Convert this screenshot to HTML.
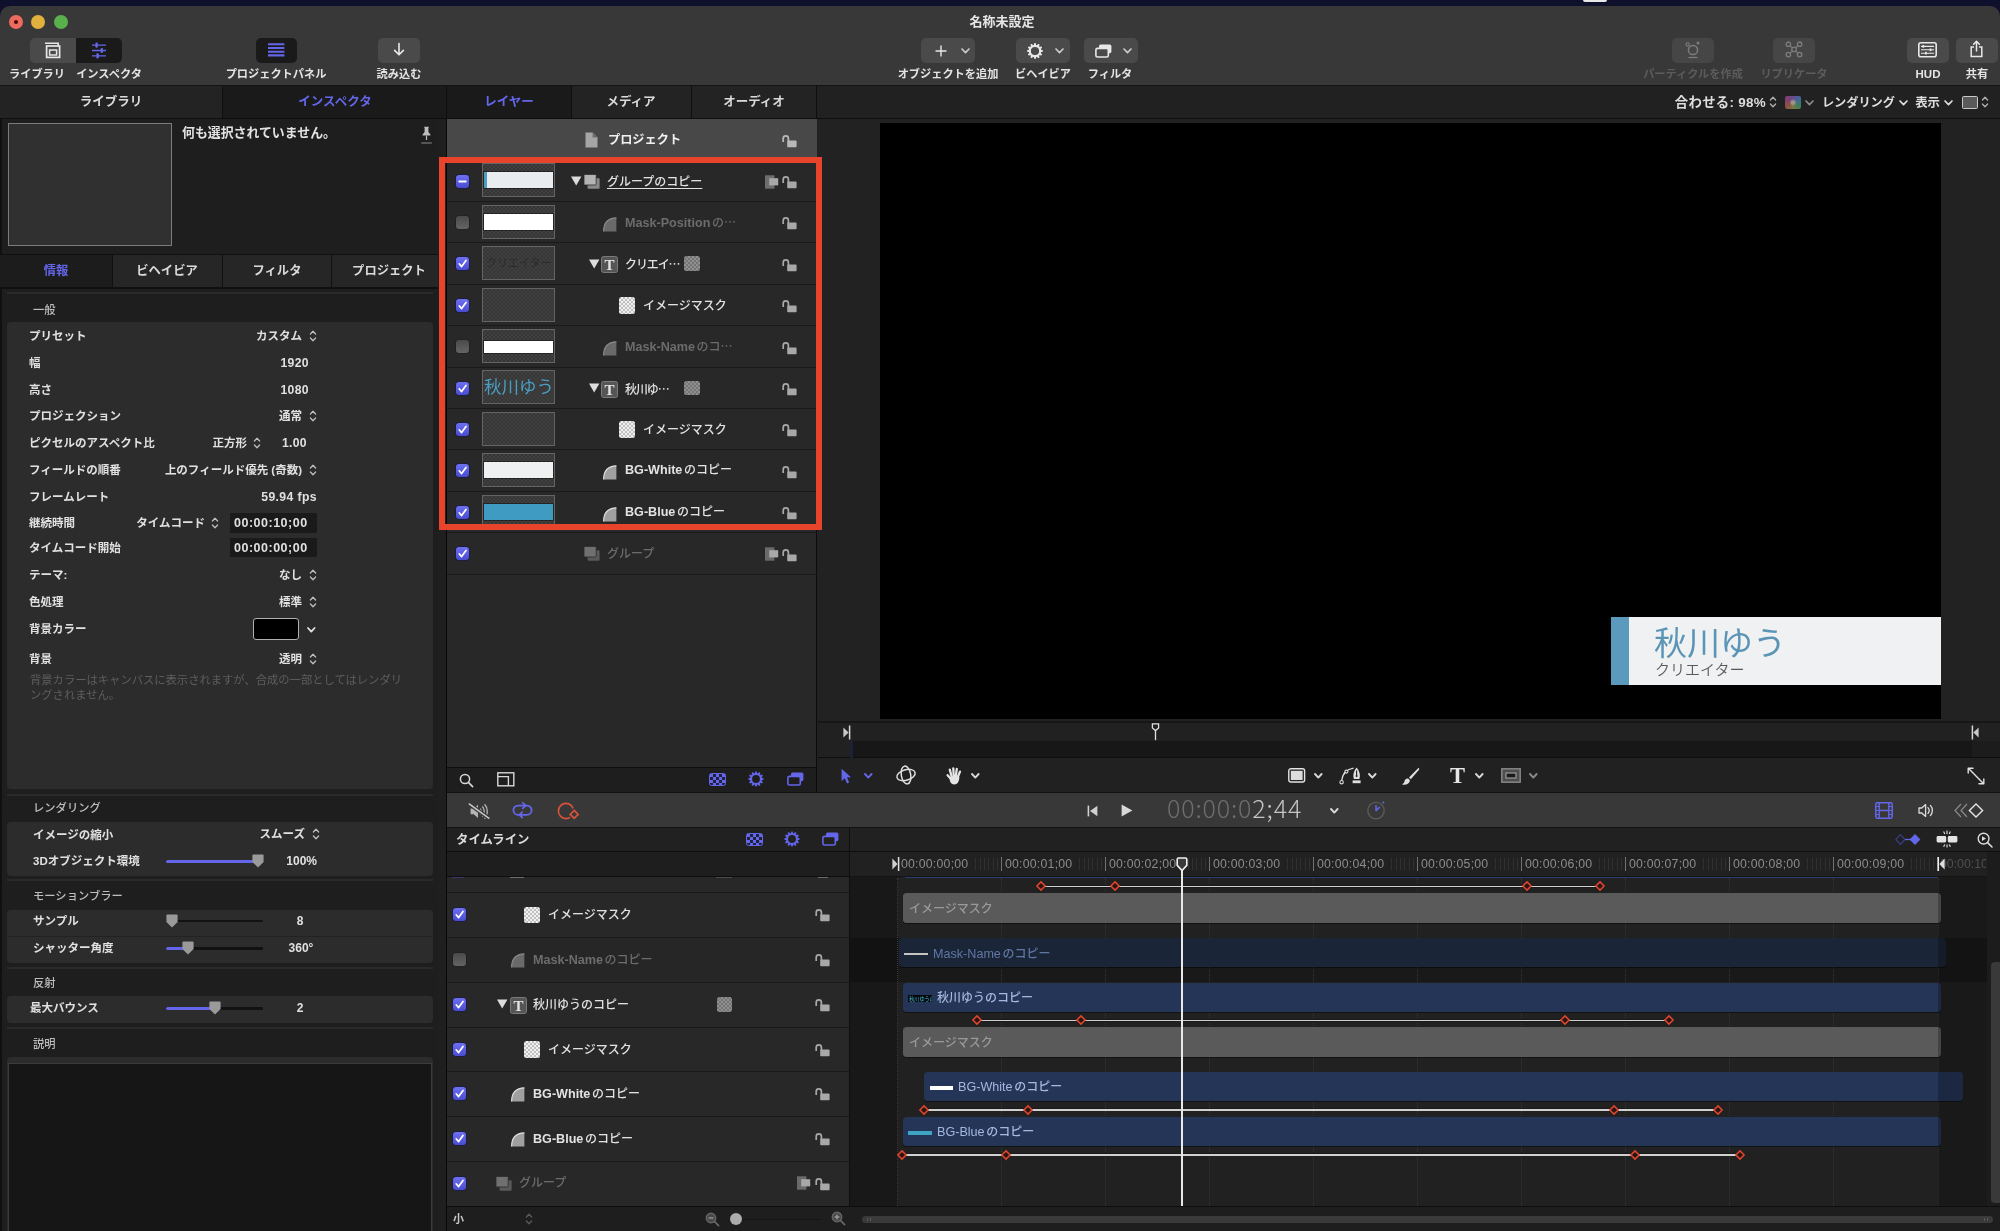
<!DOCTYPE html>
<html lang="ja"><head><meta charset="utf-8"><title>名称未設定</title>
<style>
*{box-sizing:border-box;margin:0;padding:0}
html,body{width:2000px;height:1231px;overflow:hidden;background:#212121}
body{position:relative;font-family:"Liberation Sans","Noto Sans CJK JP",sans-serif;-webkit-font-smoothing:antialiased}
div,svg{position:absolute}
.t{overflow:visible;will-change:transform}
.e{font-family:"Noto Sans CJK JP",sans-serif}
.l{font-size:12.6px;margin-right:1.6px}
svg{overflow:visible}
</style></head>
<body>
<div style="left:0px;top:0px;width:2000px;height:20px;background:#0f112c;"></div>
<div style="left:1583px;top:0px;width:24px;height:2px;background:#e8e8e8;border-radius:0 0 2px 2px;"></div>
<div style="left:0px;top:6px;width:2000px;height:80px;background:#383838;border-radius:10px 10px 0 0;"></div>
<div style="left:0px;top:85px;width:2000px;height:1px;background:#141414;"></div>
<div style="left:8.5px;top:15px;width:14px;height:14px;background:#ec6a5e;border-radius:50%;"></div>
<div style="left:13.5px;top:20px;width:4px;height:4px;background:#4a0b08;border-radius:50%;"></div>
<div style="left:31px;top:15px;width:14px;height:14px;background:#e0b13c;border-radius:50%;"></div>
<div style="left:53.5px;top:15px;width:14px;height:14px;background:#58b14a;border-radius:50%;"></div>
<div class="t" style="top:11.5px;height:20px;line-height:20px;font-size:13px;color:#e6e6e6;font-weight:700;white-space:nowrap;left:751.5px;width:500px;text-align:center;">名称未設定</div>
<div style="left:30px;top:38px;width:46px;height:25px;background:#4a4a4a;border-radius:5px 0 0 5px;"></div>
<div style="left:76px;top:38px;width:46px;height:25px;background:#1a1a1a;border-radius:0 5px 5px 0;"></div>
<svg style="left:44.2px;top:42px;" width="17" height="17" viewBox="0 0 17 17"><path d="M1 1.2H14.2V3.6" fill="none" stroke="#e8e8e8" stroke-width="1.6"/><rect x="2.6" y="4" width="13" height="11.4" fill="none" stroke="#e8e8e8" stroke-width="1.7"/><rect x="5.6" y="8" width="7" height="5" fill="none" stroke="#e8e8e8" stroke-width="1.5"/></svg>
<svg style="left:92px;top:42px;" width="15" height="17" viewBox="0 0 15 17"><g stroke="#6466ea" stroke-width="1.3"><path d="M0 3.2H14M0 8.5H14M0 13.8H14"/></g><g fill="#6466ea"><rect x="3.4" y="0.6" width="2.4" height="5.2" rx="1"/><rect x="8.6" y="5.9" width="2.4" height="5.2" rx="1"/><rect x="4.4" y="11.2" width="2.4" height="5.2" rx="1"/></g></svg>
<div class="t" style="top:64.3px;height:20px;line-height:20px;font-size:11.2px;color:#e4e4e4;font-weight:700;white-space:nowrap;left:-213px;width:500px;text-align:center;">ライブラリ</div>
<div class="t" style="top:64.3px;height:20px;line-height:20px;font-size:11.2px;color:#e4e4e4;font-weight:700;white-space:nowrap;left:-141.5px;width:500px;text-align:center;">インスペクタ</div>
<div style="left:256px;top:38px;width:41px;height:25px;background:#1a1a1a;border-radius:5px;"></div>
<svg style="left:268px;top:43.2px;" width="17" height="14" viewBox="0 0 17 14"><path d="M0 1.3H16.4M0 5H16.4M0 8.7H16.4M0 12.4H16.4" stroke="#6466ea" stroke-width="2.1"/></svg>
<div class="t" style="top:64.3px;height:20px;line-height:20px;font-size:11.2px;color:#e4e4e4;font-weight:700;white-space:nowrap;left:26px;width:500px;text-align:center;">プロジェクトパネル</div>
<div style="left:378px;top:38px;width:42px;height:25px;background:#4a4a4a;border-radius:5px;"></div>
<svg style="left:393px;top:43px;" width="12" height="14" viewBox="0 0 12 14"><path d="M6 0.6V11.4M1.6 7.4L6 11.8L10.4 7.4" fill="none" stroke="#e8e8e8" stroke-width="1.6" stroke-linecap="round" stroke-linejoin="round"/></svg>
<div class="t" style="top:64.3px;height:20px;line-height:20px;font-size:11.2px;color:#e4e4e4;font-weight:700;white-space:nowrap;left:148.5px;width:500px;text-align:center;">読み込む</div>
<div style="left:921px;top:38px;width:54px;height:25px;background:#4a4a4a;border-radius:5px;"></div>
<svg style="left:935px;top:44.5px;" width="12" height="12" viewBox="0 0 12 12"><path d="M6 0.5V11.5M0.5 6H11.5" stroke="#e8e8e8" stroke-width="1.4"/></svg>
<svg style="left:960.5px;top:47.5px;" width="9" height="6" viewBox="0 0 9 6"><path d="M1 1L4.5 4.6L8 1" fill="none" stroke="#c8c8c8" stroke-width="1.7" stroke-linecap="round" stroke-linejoin="round"/></svg>
<div class="t" style="top:64.3px;height:20px;line-height:20px;font-size:11.2px;color:#e4e4e4;font-weight:700;white-space:nowrap;left:697.5px;width:500px;text-align:center;">オブジェクトを追加</div>
<div style="left:1016px;top:38px;width:54px;height:25px;background:#4a4a4a;border-radius:5px;"></div>
<svg style="left:1026.3px;top:41.5px;" width="18" height="18" viewBox="0 0 18 18"><g transform="translate(9 9)"><circle r="5.2" fill="none" stroke="#e8e8e8" stroke-width="2.2"/><rect x="-1.0" y="-7.9" width="2.0" height="3" rx="0.8" fill="#e8e8e8" transform="rotate(0.0)"/><rect x="-1.0" y="-7.9" width="2.0" height="3" rx="0.8" fill="#e8e8e8" transform="rotate(30.0)"/><rect x="-1.0" y="-7.9" width="2.0" height="3" rx="0.8" fill="#e8e8e8" transform="rotate(60.0)"/><rect x="-1.0" y="-7.9" width="2.0" height="3" rx="0.8" fill="#e8e8e8" transform="rotate(90.0)"/><rect x="-1.0" y="-7.9" width="2.0" height="3" rx="0.8" fill="#e8e8e8" transform="rotate(120.0)"/><rect x="-1.0" y="-7.9" width="2.0" height="3" rx="0.8" fill="#e8e8e8" transform="rotate(150.0)"/><rect x="-1.0" y="-7.9" width="2.0" height="3" rx="0.8" fill="#e8e8e8" transform="rotate(180.0)"/><rect x="-1.0" y="-7.9" width="2.0" height="3" rx="0.8" fill="#e8e8e8" transform="rotate(210.0)"/><rect x="-1.0" y="-7.9" width="2.0" height="3" rx="0.8" fill="#e8e8e8" transform="rotate(240.0)"/><rect x="-1.0" y="-7.9" width="2.0" height="3" rx="0.8" fill="#e8e8e8" transform="rotate(270.0)"/><rect x="-1.0" y="-7.9" width="2.0" height="3" rx="0.8" fill="#e8e8e8" transform="rotate(300.0)"/><rect x="-1.0" y="-7.9" width="2.0" height="3" rx="0.8" fill="#e8e8e8" transform="rotate(330.0)"/></g></svg>
<svg style="left:1055.3px;top:47.5px;" width="9" height="6" viewBox="0 0 9 6"><path d="M1 1L4.5 4.6L8 1" fill="none" stroke="#c8c8c8" stroke-width="1.7" stroke-linecap="round" stroke-linejoin="round"/></svg>
<div class="t" style="top:64.3px;height:20px;line-height:20px;font-size:11.2px;color:#e4e4e4;font-weight:700;white-space:nowrap;left:792.5px;width:500px;text-align:center;">ビヘイビア</div>
<div style="left:1084px;top:38px;width:54px;height:25px;background:#4a4a4a;border-radius:5px;"></div>
<svg style="left:1094.7px;top:43.5px;" width="17" height="14" viewBox="0 0 17 14"><rect x="4" y="0.6" width="12.4" height="8.6" rx="1.6" fill="#e8e8e8"/><rect x="0.9" y="4.4" width="12.4" height="8.6" rx="1.6" fill="#4a4a4a" stroke="#e8e8e8" stroke-width="1.6"/></svg>
<svg style="left:1122.5px;top:47.5px;" width="9" height="6" viewBox="0 0 9 6"><path d="M1 1L4.5 4.6L8 1" fill="none" stroke="#c8c8c8" stroke-width="1.7" stroke-linecap="round" stroke-linejoin="round"/></svg>
<div class="t" style="top:64.3px;height:20px;line-height:20px;font-size:11.2px;color:#e4e4e4;font-weight:700;white-space:nowrap;left:860.2px;width:500px;text-align:center;">フィルタ</div>
<div style="left:1672px;top:38px;width:42px;height:25px;background:#464646;border-radius:5px;"></div>
<svg style="left:1685px;top:41px;" width="16" height="18" viewBox="0 0 16 18"><circle cx="8" cy="9" r="4.6" fill="none" stroke="#7d7d7d" stroke-width="1.5"/><circle cx="2.6" cy="3.4" r="1.6" fill="none" stroke="#7d7d7d" stroke-width="1.1"/><circle cx="13" cy="2" r="1.5" fill="#7d7d7d"/><path d="M3.5 16.5H12.5" stroke="#7d7d7d" stroke-width="1.3"/></svg>
<div class="t" style="top:64.3px;height:20px;line-height:20px;font-size:11.2px;color:#5c5c5c;font-weight:700;white-space:nowrap;left:1443px;width:500px;text-align:center;">パーティクルを作成</div>
<div style="left:1773px;top:38px;width:42px;height:25px;background:#464646;border-radius:5px;"></div>
<svg style="left:1785px;top:41px;" width="18" height="17" viewBox="0 0 18 17"><path d="M5 4.7L7.4 6.9M13 4.7L10.6 6.9M5 12.1L7.4 9.9M13 12.1L10.6 9.9" stroke="#7d7d7d" stroke-width="1.2"/><g fill="none" stroke="#7d7d7d" stroke-width="1.3"><circle cx="3.4" cy="3.2" r="2.2"/><circle cx="14.6" cy="3.2" r="2.2"/><circle cx="9" cy="8.4" r="2.2"/><circle cx="3.4" cy="13.6" r="2.2"/><circle cx="14.6" cy="13.6" r="2.2"/></g></svg>
<div class="t" style="top:64.3px;height:20px;line-height:20px;font-size:11.2px;color:#5c5c5c;font-weight:700;white-space:nowrap;left:1544px;width:500px;text-align:center;">リプリケータ</div>
<div style="left:1906.5px;top:38px;width:42px;height:25px;background:#4a4a4a;border-radius:5px;"></div>
<svg style="left:1918px;top:42px;" width="19" height="15.6" viewBox="0 0 19 15.6"><rect x="0.8" y="0.8" width="17.4" height="14" rx="2" fill="none" stroke="#e8e8e8" stroke-width="1.6"/><path d="M3 4.4H16M3 7.8H16M3 11.2H16" stroke="#e8e8e8" stroke-width="1.1"/><rect x="4.4" y="3.1" width="1.8" height="2.6" fill="#e8e8e8"/><rect x="11.6" y="6.5" width="1.8" height="2.6" fill="#e8e8e8"/><rect x="7" y="9.9" width="1.8" height="2.6" fill="#e8e8e8"/></svg>
<div class="t" style="top:64.0px;height:20px;line-height:20px;font-size:11.5px;color:#e4e4e4;font-weight:700;white-space:nowrap;left:1677.5px;width:500px;text-align:center;">HUD</div>
<div style="left:1955.5px;top:38px;width:42px;height:25px;background:#4a4a4a;border-radius:5px;"></div>
<svg style="left:1970px;top:39.6px;" width="13" height="18" viewBox="0 0 13 18"><path d="M4 7H1.2V16.6H11.8V7H9" fill="none" stroke="#e8e8e8" stroke-width="1.5"/><path d="M6.5 11V1.6M3.6 4.2L6.5 1.2L9.4 4.2" fill="none" stroke="#e8e8e8" stroke-width="1.5" stroke-linecap="round" stroke-linejoin="round"/></svg>
<div class="t" style="top:64.3px;height:20px;line-height:20px;font-size:11.2px;color:#e4e4e4;font-weight:700;white-space:nowrap;left:1726.5px;width:500px;text-align:center;">共有</div>
<div style="left:0px;top:86px;width:2000px;height:33px;background:#212121;"></div>
<div style="left:0px;top:86px;width:222px;height:33px;background:#232323;"></div>
<div style="left:222px;top:86px;width:225px;height:33px;background:#1a1a1a;"></div>
<div style="left:447px;top:86px;width:124px;height:33px;background:#1a1a1a;"></div>
<div style="left:571px;top:86px;width:120px;height:33px;background:#232323;"></div>
<div style="left:691px;top:86px;width:125px;height:33px;background:#232323;"></div>
<div style="left:222px;top:86px;width:1px;height:33px;background:#0e0e0e;"></div>
<div style="left:446px;top:86px;width:1px;height:33px;background:#0e0e0e;"></div>
<div style="left:571px;top:86px;width:1px;height:33px;background:#0e0e0e;"></div>
<div style="left:691px;top:86px;width:1px;height:33px;background:#0e0e0e;"></div>
<div style="left:816px;top:86px;width:1px;height:33px;background:#0e0e0e;"></div>
<div style="left:0px;top:118px;width:2000px;height:1px;background:#0e0e0e;"></div>
<div class="t" style="top:91.8px;height:20px;line-height:20px;font-size:12.5px;color:#dadada;font-weight:700;white-space:nowrap;left:-139.5px;width:500px;text-align:center;">ライブラリ</div>
<div class="t" style="top:91.8px;height:20px;line-height:20px;font-size:12.5px;color:#6466ea;font-weight:700;white-space:nowrap;left:84.5px;width:500px;text-align:center;">インスペクタ</div>
<div class="t" style="top:91.8px;height:20px;line-height:20px;font-size:12.5px;color:#6466ea;font-weight:700;white-space:nowrap;left:258.5px;width:500px;text-align:center;">レイヤー</div>
<div class="t" style="top:91.8px;height:20px;line-height:20px;font-size:12.5px;color:#dadada;font-weight:700;white-space:nowrap;left:381px;width:500px;text-align:center;">メディア</div>
<div class="t" style="top:91.8px;height:20px;line-height:20px;font-size:12.5px;color:#dadada;font-weight:700;white-space:nowrap;left:503.5px;width:500px;text-align:center;">オーディオ</div>
<div class="t" style="top:93.0px;height:20px;line-height:20px;font-size:13.4px;color:#dedede;font-weight:700;white-space:nowrap;letter-spacing:0.3px;left:1265.8px;width:500px;text-align:right;">合わせる: 98%</div>
<svg style="left:1768.6px;top:95px;" width="8" height="14" viewBox="0 0 8 14"><path d="M1.4 5L4 2.2L6.6 5M1.4 9L4 11.8L6.6 9" fill="none" stroke="#b0b0b0" stroke-width="1.3" stroke-linecap="round" stroke-linejoin="round"/></svg>
<div style="left:1785px;top:95.5px;width:15.5px;height:13px;border-radius:2px;background:radial-gradient(circle at 50% 50%,#a09088 0 16%,transparent 34%),conic-gradient(from 0deg,#6a4a90,#3e6a96,#3e7e5e,#7e7a44,#8a5046,#7e4070,#6a4a90);"></div>
<svg style="left:1805.0px;top:99.5px;" width="9" height="6" viewBox="0 0 9 6"><path d="M1 1L4.5 4.6L8 1" fill="none" stroke="#8a8a8a" stroke-width="1.7" stroke-linecap="round" stroke-linejoin="round"/></svg>
<div class="t" style="top:93.0px;height:20px;line-height:20px;font-size:12.2px;color:#dedede;font-weight:700;white-space:nowrap;left:1395.3px;width:500px;text-align:right;">レンダリング</div>
<svg style="left:1899.0px;top:99.5px;" width="9" height="6" viewBox="0 0 9 6"><path d="M1 1L4.5 4.6L8 1" fill="none" stroke="#dedede" stroke-width="1.7" stroke-linecap="round" stroke-linejoin="round"/></svg>
<div class="t" style="top:93.0px;height:20px;line-height:20px;font-size:12.4px;color:#dedede;font-weight:700;white-space:nowrap;left:1440.3px;width:500px;text-align:right;">表示</div>
<svg style="left:1943.5px;top:99.5px;" width="9" height="6" viewBox="0 0 9 6"><path d="M1 1L4.5 4.6L8 1" fill="none" stroke="#dedede" stroke-width="1.7" stroke-linecap="round" stroke-linejoin="round"/></svg>
<div style="left:1961.5px;top:96px;width:16px;height:12.5px;background:#5a5a5a;border:1.3px solid #c8c8c8;border-radius:1.5px;"></div>
<svg style="left:1981px;top:95px;" width="8" height="14" viewBox="0 0 8 14"><path d="M1.4 5L4 2.2L6.6 5M1.4 9L4 11.8L6.6 9" fill="none" stroke="#b0b0b0" stroke-width="1.3" stroke-linecap="round" stroke-linejoin="round"/></svg>
<div style="left:0px;top:119px;width:438px;height:1112px;background:#1e1e1e;"></div>
<div style="left:438px;top:119px;width:8px;height:1112px;background:#1f1f1f;"></div>
<div style="left:446px;top:119px;width:1px;height:1112px;background:#080808;"></div>
<div style="left:0px;top:119px;width:1.5px;height:1112px;background:#101010;"></div>
<div style="left:7.5px;top:123px;width:164px;height:123px;background:#303030;border:1px solid #7c7c7c;"></div>
<div class="t" style="top:122.8px;height:20px;line-height:20px;font-size:12.9px;color:#e2e2e2;font-weight:700;white-space:nowrap;left:182px;">何も選択されていません。</div>
<svg style="left:421px;top:126px;" width="11" height="18" viewBox="0 0 11 18"><path d="M3 0.8H8L7.4 2V6L9.4 8.6V9.6H1.6V8.6L3.6 6V2Z" fill="#bdbdbd"/><path d="M5.5 9.6V14" stroke="#bdbdbd" stroke-width="1.2"/><path d="M0.2 17H10.8" stroke="#8a8a8a" stroke-width="1"/></svg>
<div style="left:0px;top:254px;width:438px;height:34px;background:#262626;"></div>
<div style="left:0px;top:254px;width:438px;height:1px;background:#101010;"></div>
<div style="left:0px;top:287px;width:438px;height:1.5px;background:#101010;"></div>
<div style="left:0px;top:255px;width:112px;height:32px;background:#1c1c1c;"></div>
<div style="left:112px;top:255px;width:1px;height:32px;background:#111;"></div>
<div style="left:221.5px;top:255px;width:1px;height:32px;background:#111;"></div>
<div style="left:331px;top:255px;width:1px;height:32px;background:#111;"></div>
<div class="t" style="top:261.0px;height:20px;line-height:20px;font-size:12.3px;color:#6466ea;font-weight:700;white-space:nowrap;left:-194px;width:500px;text-align:center;">情報</div>
<div class="t" style="top:261.0px;height:20px;line-height:20px;font-size:12.3px;color:#dadada;font-weight:700;white-space:nowrap;left:-83px;width:500px;text-align:center;">ビヘイビア</div>
<div class="t" style="top:261.0px;height:20px;line-height:20px;font-size:12.3px;color:#dadada;font-weight:700;white-space:nowrap;left:26.5px;width:500px;text-align:center;">フィルタ</div>
<div class="t" style="top:261.0px;height:20px;line-height:20px;font-size:12.3px;color:#dadada;font-weight:700;white-space:nowrap;left:138.5px;width:500px;text-align:center;">プロジェクト</div>
<div style="left:6.5px;top:291.5px;width:426px;height:2px;background:#2a2a2a;"></div>
<div class="t" style="top:299.5px;height:20px;line-height:20px;font-size:11.3px;color:#bebebe;font-weight:500;white-space:nowrap;left:32.5px;">一般</div>
<div style="left:6.5px;top:322px;width:426px;height:466.5px;background:#2c2c2c;border-radius:4px;"></div>
<div class="t" style="top:325.5px;height:20px;line-height:20px;font-size:11.5px;color:#e0e0e0;font-weight:700;white-space:nowrap;left:28.8px;">プリセット</div>
<div class="t" style="top:352.5px;height:20px;line-height:20px;font-size:11.5px;color:#e0e0e0;font-weight:700;white-space:nowrap;left:28.8px;">幅</div>
<div class="t" style="top:379.5px;height:20px;line-height:20px;font-size:11.5px;color:#e0e0e0;font-weight:700;white-space:nowrap;left:28.8px;">高さ</div>
<div class="t" style="top:406.0px;height:20px;line-height:20px;font-size:11.5px;color:#e0e0e0;font-weight:700;white-space:nowrap;left:28.8px;">プロジェクション</div>
<div class="t" style="top:432.8px;height:20px;line-height:20px;font-size:11.5px;color:#e0e0e0;font-weight:700;white-space:nowrap;left:28.8px;">ピクセルのアスペクト比</div>
<div class="t" style="top:460.0px;height:20px;line-height:20px;font-size:11.5px;color:#e0e0e0;font-weight:700;white-space:nowrap;left:28.8px;">フィールドの順番</div>
<div class="t" style="top:486.8px;height:20px;line-height:20px;font-size:11.5px;color:#e0e0e0;font-weight:700;white-space:nowrap;left:28.8px;">フレームレート</div>
<div class="t" style="top:513.3px;height:20px;line-height:20px;font-size:11.5px;color:#e0e0e0;font-weight:700;white-space:nowrap;left:28.8px;">継続時間</div>
<div class="t" style="top:538.0px;height:20px;line-height:20px;font-size:11.5px;color:#e0e0e0;font-weight:700;white-space:nowrap;left:28.8px;">タイムコード開始</div>
<div class="t" style="top:565.0px;height:20px;line-height:20px;font-size:11.5px;color:#e0e0e0;font-weight:700;white-space:nowrap;left:28.8px;">テーマ:</div>
<div class="t" style="top:591.5px;height:20px;line-height:20px;font-size:11.5px;color:#e0e0e0;font-weight:700;white-space:nowrap;left:28.8px;">色処理</div>
<div class="t" style="top:618.5px;height:20px;line-height:20px;font-size:11.5px;color:#e0e0e0;font-weight:700;white-space:nowrap;left:28.8px;">背景カラー</div>
<div class="t" style="top:648.5px;height:20px;line-height:20px;font-size:11.5px;color:#e0e0e0;font-weight:700;white-space:nowrap;left:28.8px;">背景</div>
<div class="t" style="top:325.5px;height:20px;line-height:20px;font-size:11.5px;color:#e0e0e0;font-weight:700;white-space:nowrap;left:-198.5px;width:500px;text-align:right;">カスタム</div>
<svg style="left:308.8px;top:328.5px;" width="8" height="14" viewBox="0 0 8 14"><path d="M1.4 5L4 2.2L6.6 5M1.4 9L4 11.8L6.6 9" fill="none" stroke="#bdbdbd" stroke-width="1.3" stroke-linecap="round" stroke-linejoin="round"/></svg>
<div class="t" style="top:352.5px;height:20px;line-height:20px;font-size:12.2px;color:#e0e0e0;font-weight:700;white-space:nowrap;letter-spacing:0.35px;left:-191.3px;width:500px;text-align:right;">1920</div>
<div class="t" style="top:379.5px;height:20px;line-height:20px;font-size:12.2px;color:#e0e0e0;font-weight:700;white-space:nowrap;letter-spacing:0.35px;left:-191.3px;width:500px;text-align:right;">1080</div>
<div class="t" style="top:406.0px;height:20px;line-height:20px;font-size:11.5px;color:#e0e0e0;font-weight:700;white-space:nowrap;left:-198.5px;width:500px;text-align:right;">通常</div>
<svg style="left:308.8px;top:409px;" width="8" height="14" viewBox="0 0 8 14"><path d="M1.4 5L4 2.2L6.6 5M1.4 9L4 11.8L6.6 9" fill="none" stroke="#bdbdbd" stroke-width="1.3" stroke-linecap="round" stroke-linejoin="round"/></svg>
<div class="t" style="top:432.8px;height:20px;line-height:20px;font-size:11.5px;color:#e0e0e0;font-weight:700;white-space:nowrap;left:-253px;width:500px;text-align:right;">正方形</div>
<svg style="left:253.3px;top:435.8px;" width="8" height="14" viewBox="0 0 8 14"><path d="M1.4 5L4 2.2L6.6 5M1.4 9L4 11.8L6.6 9" fill="none" stroke="#bdbdbd" stroke-width="1.3" stroke-linecap="round" stroke-linejoin="round"/></svg>
<div class="t" style="top:432.8px;height:20px;line-height:20px;font-size:12.2px;color:#e0e0e0;font-weight:700;white-space:nowrap;letter-spacing:0.35px;left:-193.2px;width:500px;text-align:right;">1.00</div>
<div class="t" style="top:460.0px;height:20px;line-height:20px;font-size:11.5px;color:#e0e0e0;font-weight:700;white-space:nowrap;left:-198.5px;width:500px;text-align:right;">上のフィールド優先 (奇数)</div>
<svg style="left:308.8px;top:463px;" width="8" height="14" viewBox="0 0 8 14"><path d="M1.4 5L4 2.2L6.6 5M1.4 9L4 11.8L6.6 9" fill="none" stroke="#bdbdbd" stroke-width="1.3" stroke-linecap="round" stroke-linejoin="round"/></svg>
<div class="t" style="top:486.8px;height:20px;line-height:20px;font-size:12.2px;color:#e0e0e0;font-weight:700;white-space:nowrap;letter-spacing:0.4px;left:-182.7px;width:500px;text-align:right;">59.94 fps</div>
<div class="t" style="top:513.3px;height:20px;line-height:20px;font-size:11.5px;color:#e0e0e0;font-weight:700;white-space:nowrap;left:-295.5px;width:500px;text-align:right;">タイムコード</div>
<svg style="left:211.3px;top:516.3px;" width="8" height="14" viewBox="0 0 8 14"><path d="M1.4 5L4 2.2L6.6 5M1.4 9L4 11.8L6.6 9" fill="none" stroke="#bdbdbd" stroke-width="1.3" stroke-linecap="round" stroke-linejoin="round"/></svg>
<div style="left:229.5px;top:513px;width:87.5px;height:19.5px;background:#1a1a1a;border-radius:1px;"></div>
<div class="t" style="top:513.0px;height:20px;line-height:20px;font-size:12.5px;color:#e0e0e0;font-weight:700;white-space:nowrap;letter-spacing:0.5px;left:233.5px;">00:00:10;00</div>
<div style="left:229.5px;top:537.5px;width:87.5px;height:19.5px;background:#1a1a1a;border-radius:1px;"></div>
<div class="t" style="top:537.5px;height:20px;line-height:20px;font-size:12.5px;color:#e0e0e0;font-weight:700;white-space:nowrap;letter-spacing:0.5px;left:233.5px;">00:00:00;00</div>
<div class="t" style="top:565.0px;height:20px;line-height:20px;font-size:11.5px;color:#e0e0e0;font-weight:700;white-space:nowrap;left:-198.5px;width:500px;text-align:right;">なし</div>
<svg style="left:308.8px;top:568px;" width="8" height="14" viewBox="0 0 8 14"><path d="M1.4 5L4 2.2L6.6 5M1.4 9L4 11.8L6.6 9" fill="none" stroke="#bdbdbd" stroke-width="1.3" stroke-linecap="round" stroke-linejoin="round"/></svg>
<div class="t" style="top:591.5px;height:20px;line-height:20px;font-size:11.5px;color:#e0e0e0;font-weight:700;white-space:nowrap;left:-198.5px;width:500px;text-align:right;">標準</div>
<svg style="left:308.8px;top:594.5px;" width="8" height="14" viewBox="0 0 8 14"><path d="M1.4 5L4 2.2L6.6 5M1.4 9L4 11.8L6.6 9" fill="none" stroke="#bdbdbd" stroke-width="1.3" stroke-linecap="round" stroke-linejoin="round"/></svg>
<div style="left:253px;top:617.5px;width:45.5px;height:22.5px;background:#000;border:1.2px solid #b0b0b0;border-radius:3px;"></div>
<svg style="left:307.0px;top:627.2px;" width="8.6" height="6" viewBox="0 0 8.6 6"><path d="M1 1L4.3 4.6L7.6 1" fill="none" stroke="#e0e0e0" stroke-width="1.8" stroke-linecap="round" stroke-linejoin="round"/></svg>
<div class="t" style="top:648.5px;height:20px;line-height:20px;font-size:11.5px;color:#e0e0e0;font-weight:700;white-space:nowrap;left:-198.5px;width:500px;text-align:right;">透明</div>
<svg style="left:308.8px;top:651.5px;" width="8" height="14" viewBox="0 0 8 14"><path d="M1.4 5L4 2.2L6.6 5M1.4 9L4 11.8L6.6 9" fill="none" stroke="#bdbdbd" stroke-width="1.3" stroke-linecap="round" stroke-linejoin="round"/></svg>
<div class="t" style="top:670.0px;height:20px;line-height:20px;font-size:11.3px;color:#5e5e5e;font-weight:400;white-space:nowrap;left:29.5px;">背景カラーはキャンバスに表示されますが、合成の一部としてはレンダリ</div>
<div class="t" style="top:685.0px;height:20px;line-height:20px;font-size:11.3px;color:#5e5e5e;font-weight:400;white-space:nowrap;left:29.5px;">ングされません。</div>
<div style="left:6.5px;top:794px;width:426px;height:2px;background:#2a2a2a;"></div>
<div class="t" style="top:798.0px;height:20px;line-height:20px;font-size:11.3px;color:#bebebe;font-weight:500;white-space:nowrap;left:33px;">レンダリング</div>
<div style="left:6.5px;top:822px;width:426px;height:53.5px;background:#2c2c2c;border-radius:4px;"></div>
<div class="t" style="top:825.0px;height:20px;line-height:20px;font-size:11.5px;color:#e0e0e0;font-weight:700;white-space:nowrap;left:32.5px;">イメージの縮小</div>
<div class="t" style="top:823.5px;height:20px;line-height:20px;font-size:11.5px;color:#e0e0e0;font-weight:700;white-space:nowrap;left:-195px;width:500px;text-align:right;">スムーズ</div>
<svg style="left:312px;top:826.5px;" width="8" height="14" viewBox="0 0 8 14"><path d="M1.4 5L4 2.2L6.6 5M1.4 9L4 11.8L6.6 9" fill="none" stroke="#bdbdbd" stroke-width="1.3" stroke-linecap="round" stroke-linejoin="round"/></svg>
<div class="t" style="top:851.0px;height:20px;line-height:20px;font-size:11.5px;color:#e0e0e0;font-weight:700;white-space:nowrap;left:32.5px;">3Dオブジェクト環境</div>
<div style="left:165.5px;top:860px;width:97.0px;height:2.4px;background:#121212;border-radius:1px;"></div>
<div style="left:165.5px;top:859.6px;width:92.0px;height:3px;background:#6466ea;border-radius:1.5px;"></div>
<svg style="left:251.5px;top:854px;" width="12" height="14" viewBox="0 0 12 14"><path d="M1.4 0.6H10.6Q11.6 0.6 11.6 1.6V8L6 13.4L0.4 8V1.6Q0.4 0.6 1.4 0.6Z" fill="#9a9a9a"/></svg>
<div class="t" style="top:851.0px;height:20px;line-height:20px;font-size:12px;color:#e0e0e0;font-weight:700;white-space:nowrap;left:-183.5px;width:500px;text-align:right;">100%</div>
<div style="left:6.5px;top:879px;width:426px;height:2px;background:#2a2a2a;"></div>
<div class="t" style="top:886.0px;height:20px;line-height:20px;font-size:11.3px;color:#bebebe;font-weight:500;white-space:nowrap;left:33px;">モーションブラー</div>
<div style="left:6.5px;top:910px;width:426px;height:52.5px;background:#2c2c2c;border-radius:4px;"></div>
<div style="left:6.5px;top:936px;width:426px;height:1px;background:#222;"></div>
<div class="t" style="top:911.0px;height:20px;line-height:20px;font-size:11.5px;color:#e0e0e0;font-weight:700;white-space:nowrap;left:32.5px;">サンプル</div>
<div style="left:165.5px;top:920px;width:97.0px;height:2.4px;background:#121212;border-radius:1px;"></div>
<svg style="left:166px;top:914px;" width="12" height="14" viewBox="0 0 12 14"><path d="M1.4 0.6H10.6Q11.6 0.6 11.6 1.6V8L6 13.4L0.4 8V1.6Q0.4 0.6 1.4 0.6Z" fill="#9a9a9a"/></svg>
<div class="t" style="top:911.0px;height:20px;line-height:20px;font-size:12px;color:#e0e0e0;font-weight:700;white-space:nowrap;left:50px;width:500px;text-align:center;">8</div>
<div class="t" style="top:938.3px;height:20px;line-height:20px;font-size:11.5px;color:#e0e0e0;font-weight:700;white-space:nowrap;left:32.5px;">シャッター角度</div>
<div style="left:165.5px;top:947.3px;width:97.0px;height:2.4px;background:#121212;border-radius:1px;"></div>
<div style="left:165.5px;top:946.9px;width:22.0px;height:3px;background:#6466ea;border-radius:1.5px;"></div>
<svg style="left:181.5px;top:941.3px;" width="12" height="14" viewBox="0 0 12 14"><path d="M1.4 0.6H10.6Q11.6 0.6 11.6 1.6V8L6 13.4L0.4 8V1.6Q0.4 0.6 1.4 0.6Z" fill="#9a9a9a"/></svg>
<div class="t" style="top:938.3px;height:20px;line-height:20px;font-size:12px;color:#e0e0e0;font-weight:700;white-space:nowrap;left:50.5px;width:500px;text-align:center;">360°</div>
<div style="left:6.5px;top:966.5px;width:426px;height:2px;background:#2a2a2a;"></div>
<div class="t" style="top:973.0px;height:20px;line-height:20px;font-size:11.3px;color:#bebebe;font-weight:500;white-space:nowrap;left:33px;">反射</div>
<div style="left:6.5px;top:996px;width:426px;height:26.5px;background:#2c2c2c;border-radius:4px;"></div>
<div class="t" style="top:998.3px;height:20px;line-height:20px;font-size:11.5px;color:#e0e0e0;font-weight:700;white-space:nowrap;left:30px;">最大バウンス</div>
<div style="left:165.5px;top:1007.3px;width:97.0px;height:2.4px;background:#121212;border-radius:1px;"></div>
<div style="left:165.5px;top:1006.9px;width:49.0px;height:3px;background:#6466ea;border-radius:1.5px;"></div>
<svg style="left:208.5px;top:1001.3px;" width="12" height="14" viewBox="0 0 12 14"><path d="M1.4 0.6H10.6Q11.6 0.6 11.6 1.6V8L6 13.4L0.4 8V1.6Q0.4 0.6 1.4 0.6Z" fill="#9a9a9a"/></svg>
<div class="t" style="top:998.3px;height:20px;line-height:20px;font-size:12px;color:#e0e0e0;font-weight:700;white-space:nowrap;left:50px;width:500px;text-align:center;">2</div>
<div style="left:6.5px;top:1027px;width:426px;height:2px;background:#2a2a2a;"></div>
<div class="t" style="top:1033.5px;height:20px;line-height:20px;font-size:11.3px;color:#bebebe;font-weight:500;white-space:nowrap;left:33px;">説明</div>
<div style="left:6.5px;top:1057px;width:426px;height:180px;background:#2c2c2c;border-radius:4px;"></div>
<div style="left:7.5px;top:1063px;width:424.5px;height:175px;background:#161616;border:1px solid #3c3c3c;"></div>
<div style="left:447px;top:119px;width:369px;height:648px;background:#282828;"></div>
<div style="left:816px;top:119px;width:1.2px;height:674px;background:#0c0c0c;"></div>
<div style="left:447px;top:119px;width:369.5px;height:41px;background:#484848;"></div>
<svg style="left:585px;top:131.5px;" width="13" height="16" viewBox="0 0 13 16"><path d="M0.5 0.5H7.6L12.5 5.4V15.5H0.5Z" fill="#a6a6a6"/><path d="M7.6 0.5V5.4H12.5Z" fill="#6c6c6c"/></svg>
<div class="t" style="top:130.4px;height:20px;line-height:20px;font-size:12.2px;color:#f0f0f0;font-weight:700;white-space:nowrap;left:607.5px;">プロジェクト</div>
<svg style="left:782px;top:133.5px;" width="15" height="14" viewBox="0 0 15 14"><path d="M1.2 8V4.4a2.6 2.6 0 0 1 5.2 0V7" fill="none" stroke="#b8b8b8" stroke-width="1.7"/><rect x="5.2" y="6.6" width="9.4" height="6.6" rx="0.8" fill="#b8b8b8"/></svg>
<div style="left:456.3px;top:174.5px;width:13px;height:13px;border-radius:3.2px;background:linear-gradient(#6e70f2,#4a4cd0);box-shadow:0 0 0 0.8px #1a1a48;"></div>
<svg style="left:456.3px;top:174.5px;" width="13" height="13" viewBox="0 0 13 13"><path d="M3.4 6.5H9.6" stroke="#fff" stroke-width="2.2" stroke-linecap="round"/></svg>
<div style="left:482px;top:163.4px;width:72.5px;height:34px;border-radius:0px;background:repeating-conic-gradient(#363636 0 25%,#404040 0 50%) 0 0/4px 4px;border:1px solid #646464;"></div>
<div style="left:484px;top:172.4px;width:69px;height:15.6px;background:#e9edf0;box-shadow:0 0 0 0.7px rgba(0,0,0,0.55);"></div>
<div style="left:484px;top:172.4px;width:3px;height:15.6px;background:#4a9ec4;"></div>
<svg style="left:570.8px;top:176.0px;" width="11" height="10" viewBox="0 0 11 10"><path d="M0 0.6H10.4L5.2 9.4Z" fill="#dcdcdc"/></svg>
<svg style="left:584px;top:173.5px;" width="17" height="16" viewBox="0 0 17 16"><rect x="3.6" y="4.2" width="12" height="10.6" rx="0.8" fill="#8a8a8a"/><rect x="0" y="0.4" width="12.2" height="10.6" rx="0.8" fill="#b4b4b4" stroke="#282828" stroke-width="0.8"/></svg>
<div class="t" style="top:172.2px;height:20px;line-height:20px;font-size:12px;color:#e2e2e2;font-weight:500;white-space:nowrap;left:607px;text-decoration:underline;text-underline-offset:2.4px;text-decoration-thickness:1.2px;">グループのコピー</div>
<svg style="left:765px;top:174.5px;" width="14" height="14" viewBox="0 0 14 14"><rect x="0" y="0.3" width="9.4" height="13.4" fill="#6e6e6e"/><rect x="4.2" y="3.2" width="9" height="7.2" fill="#a8a8a8"/></svg>
<svg style="left:782px;top:175.0px;" width="15" height="14" viewBox="0 0 15 14"><path d="M1.2 8V4.4a2.6 2.6 0 0 1 5.2 0V7" fill="none" stroke="#a8a8a8" stroke-width="1.7"/><rect x="5.2" y="6.6" width="9.4" height="6.6" rx="0.8" fill="#a8a8a8"/></svg>
<div style="left:447px;top:200.9px;width:369.5px;height:1.2px;background:#1a1a1a;"></div>
<div style="left:456.3px;top:215.9px;width:13px;height:13px;border-radius:3.2px;background:linear-gradient(#4a4a4a,#646464);box-shadow:0 0 0 0.6px #1c1c1c;"></div>
<div style="left:482px;top:204.8px;width:72.5px;height:34px;border-radius:0px;background:repeating-conic-gradient(#363636 0 25%,#404040 0 50%) 0 0/4px 4px;border:1px solid #646464;"></div>
<div style="left:484px;top:214.0px;width:69.3px;height:16px;background:#ffffff;box-shadow:0 0 0 0.7px rgba(0,0,0,0.55);"></div>
<svg style="left:603px;top:216.9px;" width="14" height="15" viewBox="0 0 14 15"><path d="M0.6 14.4C0.6 6 5 1 13.4 0.8V14.4Z" fill="#6a6a6a"/><path d="M0.6 14.4C0.6 6 5 1 13.4 0.8" fill="none" stroke="#8a8a8a" stroke-width="1.2"/></svg>
<div class="t" style="top:212.0px;height:20px;line-height:20px;font-size:12px;color:#6c6c6c;font-weight:500;white-space:nowrap;left:625px;"><b class="l">Mask-Position</b>の<span class="e">…</span></div>
<svg style="left:782px;top:216.4px;" width="15" height="14" viewBox="0 0 15 14"><path d="M1.2 8V4.4a2.6 2.6 0 0 1 5.2 0V7" fill="none" stroke="#a8a8a8" stroke-width="1.7"/><rect x="5.2" y="6.6" width="9.4" height="6.6" rx="0.8" fill="#a8a8a8"/></svg>
<div style="left:447px;top:242.3px;width:369.5px;height:1.2px;background:#1a1a1a;"></div>
<div style="left:456.3px;top:257.3px;width:13px;height:13px;border-radius:3.2px;background:linear-gradient(#6e70f2,#4a4cd0);box-shadow:0 0 0 0.8px #1a1a48;"></div>
<svg style="left:456.3px;top:257.3px;" width="13" height="13" viewBox="0 0 13 13"><path d="M3.2 6.8L5.6 9.6L10 3.4" fill="none" stroke="#fff" stroke-width="1.7" stroke-linecap="round" stroke-linejoin="round"/></svg>
<div style="left:482px;top:246.20000000000002px;width:72.5px;height:34px;border-radius:0px;background:repeating-conic-gradient(#363636 0 25%,#404040 0 50%) 0 0/4px 4px;border:1px solid #646464;"></div>
<div class="t" style="left:486px;top:254.20000000000002px;width:68px;height:18px;line-height:18px;font-size:11px;color:#2b2b2b;font-weight:400;white-space:nowrap;overflow:hidden;font-feature-settings:normal">クリエイター</div>
<svg style="left:588.5px;top:258.8px;" width="11" height="10" viewBox="0 0 11 10"><path d="M0 0.6H10.4L5.2 9.4Z" fill="#dcdcdc"/></svg>
<svg style="left:601px;top:256.3px;will-change:transform;" width="17" height="17" viewBox="0 0 17 17"><rect x="0.5" y="0.5" width="16" height="16" rx="2" fill="#555" stroke="#7a7a7a"/><text x="8.5" y="14" text-anchor="middle" font-family="Liberation Serif,serif" font-size="15" font-weight="700" fill="#e4e4e4">T</text></svg>
<div class="t" style="top:254.3px;height:20px;line-height:20px;font-size:12px;color:#e2e2e2;font-weight:500;white-space:nowrap;letter-spacing:-1.1px;left:625px;">クリエイ<span class="e">…</span></div>
<div style="left:684.3px;top:256.3px;width:15.5px;height:14.5px;border-radius:2.5px;background:repeating-conic-gradient(#747474 0 25%,#909090 0 50%) 0 0/4px 4px;"></div>
<svg style="left:782px;top:257.8px;" width="15" height="14" viewBox="0 0 15 14"><path d="M1.2 8V4.4a2.6 2.6 0 0 1 5.2 0V7" fill="none" stroke="#a8a8a8" stroke-width="1.7"/><rect x="5.2" y="6.6" width="9.4" height="6.6" rx="0.8" fill="#a8a8a8"/></svg>
<div style="left:447px;top:283.7px;width:369.5px;height:1.2px;background:#1a1a1a;"></div>
<div style="left:456.3px;top:298.7px;width:13px;height:13px;border-radius:3.2px;background:linear-gradient(#6e70f2,#4a4cd0);box-shadow:0 0 0 0.8px #1a1a48;"></div>
<svg style="left:456.3px;top:298.7px;" width="13" height="13" viewBox="0 0 13 13"><path d="M3.2 6.8L5.6 9.6L10 3.4" fill="none" stroke="#fff" stroke-width="1.7" stroke-linecap="round" stroke-linejoin="round"/></svg>
<div style="left:482px;top:287.59999999999997px;width:72.5px;height:34px;border-radius:0px;background:repeating-conic-gradient(#363636 0 25%,#404040 0 50%) 0 0/4px 4px;border:1px solid #646464;"></div>
<div style="left:618.8px;top:297.2px;width:16.6px;height:16.6px;border-radius:2.5px;background:repeating-conic-gradient(#f0f0f0 0 25%,#c0c0c0 0 50%) 0 0/4px 4px;"></div>
<div class="t" style="top:295.7px;height:20px;line-height:20px;font-size:12px;color:#e2e2e2;font-weight:500;white-space:nowrap;left:643px;">イメージマスク</div>
<svg style="left:782px;top:299.2px;" width="15" height="14" viewBox="0 0 15 14"><path d="M1.2 8V4.4a2.6 2.6 0 0 1 5.2 0V7" fill="none" stroke="#a8a8a8" stroke-width="1.7"/><rect x="5.2" y="6.6" width="9.4" height="6.6" rx="0.8" fill="#a8a8a8"/></svg>
<div style="left:447px;top:325.1px;width:369.5px;height:1.2px;background:#1a1a1a;"></div>
<div style="left:456.3px;top:340.1px;width:13px;height:13px;border-radius:3.2px;background:linear-gradient(#4a4a4a,#646464);box-shadow:0 0 0 0.6px #1c1c1c;"></div>
<div style="left:482px;top:329.0px;width:72.5px;height:34px;border-radius:0px;background:repeating-conic-gradient(#363636 0 25%,#404040 0 50%) 0 0/4px 4px;border:1px solid #646464;"></div>
<div style="left:484px;top:340.6px;width:69.3px;height:12px;background:#ffffff;box-shadow:0 0 0 0.7px rgba(0,0,0,0.55);"></div>
<svg style="left:603px;top:341.1px;" width="14" height="15" viewBox="0 0 14 15"><path d="M0.6 14.4C0.6 6 5 1 13.4 0.8V14.4Z" fill="#6a6a6a"/><path d="M0.6 14.4C0.6 6 5 1 13.4 0.8" fill="none" stroke="#8a8a8a" stroke-width="1.2"/></svg>
<div class="t" style="top:336.2px;height:20px;line-height:20px;font-size:12px;color:#6c6c6c;font-weight:500;white-space:nowrap;left:625px;"><b class="l">Mask-Name</b>のコ<span class="e">…</span></div>
<svg style="left:782px;top:340.6px;" width="15" height="14" viewBox="0 0 15 14"><path d="M1.2 8V4.4a2.6 2.6 0 0 1 5.2 0V7" fill="none" stroke="#a8a8a8" stroke-width="1.7"/><rect x="5.2" y="6.6" width="9.4" height="6.6" rx="0.8" fill="#a8a8a8"/></svg>
<div style="left:447px;top:366.5px;width:369.5px;height:1.2px;background:#1a1a1a;"></div>
<div style="left:456.3px;top:381.5px;width:13px;height:13px;border-radius:3.2px;background:linear-gradient(#6e70f2,#4a4cd0);box-shadow:0 0 0 0.8px #1a1a48;"></div>
<svg style="left:456.3px;top:381.5px;" width="13" height="13" viewBox="0 0 13 13"><path d="M3.2 6.8L5.6 9.6L10 3.4" fill="none" stroke="#fff" stroke-width="1.7" stroke-linecap="round" stroke-linejoin="round"/></svg>
<div style="left:482px;top:370.4px;width:72.5px;height:34px;border-radius:0px;background:repeating-conic-gradient(#363636 0 25%,#404040 0 50%) 0 0/4px 4px;border:1px solid #646464;"></div>
<div class="t" style="left:483.5px;top:373.4px;width:72px;height:28px;line-height:28px;font-size:17.5px;color:#4a9ec4;font-weight:400;white-space:nowrap;overflow:hidden;font-feature-settings:normal">秋川ゆう</div>
<svg style="left:588.5px;top:383.0px;" width="11" height="10" viewBox="0 0 11 10"><path d="M0 0.6H10.4L5.2 9.4Z" fill="#dcdcdc"/></svg>
<svg style="left:601px;top:380.5px;will-change:transform;" width="17" height="17" viewBox="0 0 17 17"><rect x="0.5" y="0.5" width="16" height="16" rx="2" fill="#555" stroke="#7a7a7a"/><text x="8.5" y="14" text-anchor="middle" font-family="Liberation Serif,serif" font-size="15" font-weight="700" fill="#e4e4e4">T</text></svg>
<div class="t" style="top:378.5px;height:20px;line-height:20px;font-size:12px;color:#e2e2e2;font-weight:500;white-space:nowrap;letter-spacing:-1.1px;left:625px;">秋川ゆ<span class="e">…</span></div>
<div style="left:684.3px;top:380.5px;width:15.5px;height:14.5px;border-radius:2.5px;background:repeating-conic-gradient(#747474 0 25%,#909090 0 50%) 0 0/4px 4px;"></div>
<svg style="left:782px;top:382.0px;" width="15" height="14" viewBox="0 0 15 14"><path d="M1.2 8V4.4a2.6 2.6 0 0 1 5.2 0V7" fill="none" stroke="#a8a8a8" stroke-width="1.7"/><rect x="5.2" y="6.6" width="9.4" height="6.6" rx="0.8" fill="#a8a8a8"/></svg>
<div style="left:447px;top:407.9px;width:369.5px;height:1.2px;background:#1a1a1a;"></div>
<div style="left:456.3px;top:422.9px;width:13px;height:13px;border-radius:3.2px;background:linear-gradient(#6e70f2,#4a4cd0);box-shadow:0 0 0 0.8px #1a1a48;"></div>
<svg style="left:456.3px;top:422.9px;" width="13" height="13" viewBox="0 0 13 13"><path d="M3.2 6.8L5.6 9.6L10 3.4" fill="none" stroke="#fff" stroke-width="1.7" stroke-linecap="round" stroke-linejoin="round"/></svg>
<div style="left:482px;top:411.79999999999995px;width:72.5px;height:34px;border-radius:0px;background:repeating-conic-gradient(#363636 0 25%,#404040 0 50%) 0 0/4px 4px;border:1px solid #646464;"></div>
<div style="left:618.8px;top:421.4px;width:16.6px;height:16.6px;border-radius:2.5px;background:repeating-conic-gradient(#f0f0f0 0 25%,#c0c0c0 0 50%) 0 0/4px 4px;"></div>
<div class="t" style="top:419.9px;height:20px;line-height:20px;font-size:12px;color:#e2e2e2;font-weight:500;white-space:nowrap;left:643px;">イメージマスク</div>
<svg style="left:782px;top:423.4px;" width="15" height="14" viewBox="0 0 15 14"><path d="M1.2 8V4.4a2.6 2.6 0 0 1 5.2 0V7" fill="none" stroke="#a8a8a8" stroke-width="1.7"/><rect x="5.2" y="6.6" width="9.4" height="6.6" rx="0.8" fill="#a8a8a8"/></svg>
<div style="left:447px;top:449.3px;width:369.5px;height:1.2px;background:#1a1a1a;"></div>
<div style="left:456.3px;top:464.3px;width:13px;height:13px;border-radius:3.2px;background:linear-gradient(#6e70f2,#4a4cd0);box-shadow:0 0 0 0.8px #1a1a48;"></div>
<svg style="left:456.3px;top:464.3px;" width="13" height="13" viewBox="0 0 13 13"><path d="M3.2 6.8L5.6 9.6L10 3.4" fill="none" stroke="#fff" stroke-width="1.7" stroke-linecap="round" stroke-linejoin="round"/></svg>
<div style="left:482px;top:453.2px;width:72.5px;height:34px;border-radius:0px;background:repeating-conic-gradient(#363636 0 25%,#404040 0 50%) 0 0/4px 4px;border:1px solid #646464;"></div>
<div style="left:484px;top:462.4px;width:69.3px;height:15.8px;background:#eef0f2;box-shadow:0 0 0 0.7px rgba(0,0,0,0.55);"></div>
<svg style="left:603px;top:465.3px;" width="14" height="15" viewBox="0 0 14 15"><path d="M0.6 14.4C0.6 6 5 1 13.4 0.8V14.4Z" fill="#a0a0a0"/><path d="M0.6 14.4C0.6 6 5 1 13.4 0.8" fill="none" stroke="#e0e0e0" stroke-width="1.2"/></svg>
<div class="t" style="top:460.4px;height:20px;line-height:20px;font-size:12px;color:#e2e2e2;font-weight:500;white-space:nowrap;left:625px;"><b class="l">BG-White</b>のコピー</div>
<svg style="left:782px;top:464.8px;" width="15" height="14" viewBox="0 0 15 14"><path d="M1.2 8V4.4a2.6 2.6 0 0 1 5.2 0V7" fill="none" stroke="#a8a8a8" stroke-width="1.7"/><rect x="5.2" y="6.6" width="9.4" height="6.6" rx="0.8" fill="#a8a8a8"/></svg>
<div style="left:447px;top:490.7px;width:369.5px;height:1.2px;background:#1a1a1a;"></div>
<div style="left:456.3px;top:505.69999999999993px;width:13px;height:13px;border-radius:3.2px;background:linear-gradient(#6e70f2,#4a4cd0);box-shadow:0 0 0 0.8px #1a1a48;"></div>
<svg style="left:456.3px;top:505.69999999999993px;" width="13" height="13" viewBox="0 0 13 13"><path d="M3.2 6.8L5.6 9.6L10 3.4" fill="none" stroke="#fff" stroke-width="1.7" stroke-linecap="round" stroke-linejoin="round"/></svg>
<div style="left:482px;top:494.59999999999997px;width:72.5px;height:34px;border-radius:0px;background:repeating-conic-gradient(#363636 0 25%,#404040 0 50%) 0 0/4px 4px;border:1px solid #646464;"></div>
<div style="left:484px;top:503.79999999999995px;width:69.3px;height:15.8px;background:#3f9bc2;box-shadow:0 0 0 0.7px rgba(0,0,0,0.55);"></div>
<svg style="left:603px;top:506.69999999999993px;" width="14" height="15" viewBox="0 0 14 15"><path d="M0.6 14.4C0.6 6 5 1 13.4 0.8V14.4Z" fill="#a0a0a0"/><path d="M0.6 14.4C0.6 6 5 1 13.4 0.8" fill="none" stroke="#e0e0e0" stroke-width="1.2"/></svg>
<div class="t" style="top:501.8px;height:20px;line-height:20px;font-size:12px;color:#e2e2e2;font-weight:500;white-space:nowrap;left:625px;"><b class="l">BG-Blue</b>のコピー</div>
<svg style="left:782px;top:506.19999999999993px;" width="15" height="14" viewBox="0 0 15 14"><path d="M1.2 8V4.4a2.6 2.6 0 0 1 5.2 0V7" fill="none" stroke="#a8a8a8" stroke-width="1.7"/><rect x="5.2" y="6.6" width="9.4" height="6.6" rx="0.8" fill="#a8a8a8"/></svg>
<div style="left:447px;top:532.0999999999999px;width:369.5px;height:1.2px;background:#1a1a1a;"></div>
<div style="left:456.3px;top:547.0999999999999px;width:13px;height:13px;border-radius:3.2px;background:linear-gradient(#6e70f2,#4a4cd0);box-shadow:0 0 0 0.8px #1a1a48;"></div>
<svg style="left:456.3px;top:547.0999999999999px;" width="13" height="13" viewBox="0 0 13 13"><path d="M3.2 6.8L5.6 9.6L10 3.4" fill="none" stroke="#fff" stroke-width="1.7" stroke-linecap="round" stroke-linejoin="round"/></svg>
<svg style="left:584px;top:546.0999999999999px;" width="17" height="16" viewBox="0 0 17 16"><rect x="3.6" y="4.2" width="12" height="10.6" rx="0.8" fill="#5a5a5a"/><rect x="0" y="0.4" width="12.2" height="10.6" rx="0.8" fill="#707070" stroke="#282828" stroke-width="0.8"/></svg>
<div class="t" style="top:543.9px;height:20px;line-height:20px;font-size:12px;color:#6c6c6c;font-weight:500;white-space:nowrap;left:607px;">グループ</div>
<svg style="left:765px;top:547.0999999999999px;" width="14" height="14" viewBox="0 0 14 14"><rect x="0" y="0.3" width="9.4" height="13.4" fill="#6a6a6a"/><rect x="4.2" y="3.2" width="9" height="7.2" fill="#a8a8a8"/></svg>
<svg style="left:782px;top:547.5999999999999px;" width="15" height="14" viewBox="0 0 15 14"><path d="M1.2 8V4.4a2.6 2.6 0 0 1 5.2 0V7" fill="none" stroke="#a8a8a8" stroke-width="1.7"/><rect x="5.2" y="6.6" width="9.4" height="6.6" rx="0.8" fill="#a8a8a8"/></svg>
<div style="left:447px;top:573.5px;width:369.5px;height:1.2px;background:#1a1a1a;"></div>
<div style="left:447px;top:766.5px;width:369.5px;height:1.5px;background:#0e0e0e;"></div>
<div style="left:447px;top:768px;width:369px;height:24.5px;background:#1e1e1e;"></div>
<svg style="left:459px;top:772.5px;" width="15" height="15" viewBox="0 0 15 15"><circle cx="6" cy="6" r="4.6" fill="none" stroke="#d8d8d8" stroke-width="1.5"/><path d="M9.4 9.4L13.6 13.6" stroke="#d8d8d8" stroke-width="1.6" stroke-linecap="round"/></svg>
<svg style="left:497px;top:772px;" width="18" height="15" viewBox="0 0 18 15"><rect x="0.8" y="0.8" width="16" height="13" fill="none" stroke="#d8d8d8" stroke-width="1.4"/><path d="M0.8 4.6H11.4V13.8" fill="none" stroke="#d8d8d8" stroke-width="1.4"/></svg>
<div style="left:708.5999999999999px;top:772.8px;width:17.4px;height:13.4px;border-radius:2.5px;background:repeating-conic-gradient(#20203f 0 25%,#6466ea 0 50%) 0 0/6px 6px;border:1.2px solid #6466ea;"></div>
<svg style="left:747.4px;top:770.3px;" width="18" height="18" viewBox="0 0 18 18"><g transform="translate(9 9)"><circle r="5" fill="none" stroke="#6466ea" stroke-width="2.2"/><rect x="-1.0" y="-7.6" width="2.0" height="3" rx="0.8" fill="#6466ea" transform="rotate(0.0)"/><rect x="-1.0" y="-7.6" width="2.0" height="3" rx="0.8" fill="#6466ea" transform="rotate(30.0)"/><rect x="-1.0" y="-7.6" width="2.0" height="3" rx="0.8" fill="#6466ea" transform="rotate(60.0)"/><rect x="-1.0" y="-7.6" width="2.0" height="3" rx="0.8" fill="#6466ea" transform="rotate(90.0)"/><rect x="-1.0" y="-7.6" width="2.0" height="3" rx="0.8" fill="#6466ea" transform="rotate(120.0)"/><rect x="-1.0" y="-7.6" width="2.0" height="3" rx="0.8" fill="#6466ea" transform="rotate(150.0)"/><rect x="-1.0" y="-7.6" width="2.0" height="3" rx="0.8" fill="#6466ea" transform="rotate(180.0)"/><rect x="-1.0" y="-7.6" width="2.0" height="3" rx="0.8" fill="#6466ea" transform="rotate(210.0)"/><rect x="-1.0" y="-7.6" width="2.0" height="3" rx="0.8" fill="#6466ea" transform="rotate(240.0)"/><rect x="-1.0" y="-7.6" width="2.0" height="3" rx="0.8" fill="#6466ea" transform="rotate(270.0)"/><rect x="-1.0" y="-7.6" width="2.0" height="3" rx="0.8" fill="#6466ea" transform="rotate(300.0)"/><rect x="-1.0" y="-7.6" width="2.0" height="3" rx="0.8" fill="#6466ea" transform="rotate(330.0)"/></g></svg>
<svg style="left:787.1px;top:772.3px;" width="17" height="14" viewBox="0 0 17 14"><rect x="4" y="0.6" width="12.4" height="8.6" rx="1.6" fill="#6466ea"/><rect x="0.9" y="4.4" width="12.4" height="8.6" rx="1.6" fill="#1e1e1e" stroke="#6466ea" stroke-width="1.6"/></svg>
<div style="left:817.5px;top:119px;width:1182.5px;height:603px;background:#222222;"></div>
<div style="left:880px;top:123px;width:1060.5px;height:595.5px;background:#000;"></div>
<div style="left:1610.5px;top:616.5px;width:330px;height:68px;background:#f0f1f2;"></div>
<div style="left:1610.5px;top:616.5px;width:18.5px;height:68px;background:#5b9abc;"></div>
<div class="t" style="left:1653.5px;top:621.6px;height:44px;line-height:44px;font-size:33px;color:#5b95b6;font-weight:400;white-space:nowrap;font-feature-settings:normal">秋川ゆう</div>
<div class="t" style="left:1654.5px;top:659.2px;height:22px;line-height:22px;font-size:15px;color:#5a5a5a;font-weight:350;white-space:nowrap;font-feature-settings:normal">クリエイター</div>
<div style="left:817.5px;top:721px;width:1182.5px;height:1.5px;background:#161616;"></div>
<div style="left:817.5px;top:722.5px;width:1182.5px;height:18px;background:#212121;"></div>
<div style="left:817.5px;top:740.5px;width:1182.5px;height:17px;background:#212121;"></div>
<div style="left:851px;top:740.5px;width:1149px;height:17px;background:#171717;"></div>
<div style="left:1972px;top:740.5px;width:28px;height:17px;background:#1c1c1c;"></div>
<div style="left:817.5px;top:757px;width:1182.5px;height:1.2px;background:#0e0e0e;"></div>
<svg style="left:843px;top:724.5px;" width="8" height="15" viewBox="0 0 8 15"><path d="M0.4 2.4L5.6 7.4L0.4 12.4Z" fill="#c8c8c8"/><path d="M6.6 0.5V14.5" stroke="#d8d8d8" stroke-width="1.5"/></svg>
<svg style="left:1970.5px;top:724.5px;" width="8" height="15" viewBox="0 0 8 15"><path d="M7.6 2.4L2.4 7.4L7.6 12.4Z" fill="#c8c8c8"/><path d="M1.4 0.5V14.5" stroke="#d8d8d8" stroke-width="1.5"/></svg>
<div style="left:850.3px;top:740.5px;width:3px;height:17px;background:#1b2238;"></div>
<svg style="left:1151px;top:723px;" width="9" height="18" viewBox="0 0 9 18"><path d="M1.4 0.8H7.6V5L4.5 7.6L1.4 5Z" fill="none" stroke="#e0e0e0" stroke-width="1.3"/><path d="M4.5 7.6V17.2" stroke="#e0e0e0" stroke-width="1.3"/></svg>
<div style="left:817.5px;top:758.2px;width:1182.5px;height:34.3px;background:#212121;"></div>
<svg style="left:840px;top:767.5px;" width="12" height="17" viewBox="0 0 12 17"><path d="M1.6 0.8V13L4.8 10.2L7 15.6L9.2 14.6L7 9.4L11 9.2Z" fill="#6466ea"/></svg>
<svg style="left:863.7px;top:773px;" width="8.6" height="6" viewBox="0 0 8.6 6"><path d="M1 1L4.3 4.6L7.6 1" fill="none" stroke="#6466ea" stroke-width="1.9" stroke-linecap="round" stroke-linejoin="round"/></svg>
<svg style="left:896.2px;top:765.1px;" width="20" height="20" viewBox="0 0 20 20"><g fill="none" stroke="#e0e0e0" stroke-width="1.5"><ellipse cx="10" cy="10" rx="4.7" ry="9" transform="rotate(-10 10 10)"/><ellipse cx="10" cy="10" rx="9.4" ry="5.2" transform="rotate(-16 10 10)"/></g></svg>
<svg style="left:945.6px;top:766.6px;" width="16" height="18" viewBox="0 0 16 18"><g stroke="#e4e4e4" stroke-width="2.3" stroke-linecap="round" fill="none"><path d="M5 12L1.6 8.2"/><path d="M5.6 9.5L3.8 2.6"/><path d="M7.7 9L7.3 1.4"/><path d="M9.8 9L10.8 1.9"/><path d="M11.8 10L14 4.6"/></g><path d="M3.6 10.5C3.4 14.5 5 17.4 8.2 17.4C11.6 17.4 13.2 14.6 13.4 10L9 7.6Z" fill="#e4e4e4"/></svg>
<svg style="left:971.2px;top:773px;" width="8.6" height="6" viewBox="0 0 8.6 6"><path d="M1 1L4.3 4.6L7.6 1" fill="none" stroke="#d8d8d8" stroke-width="1.9" stroke-linecap="round" stroke-linejoin="round"/></svg>
<svg style="left:1288px;top:768px;" width="18" height="15" viewBox="0 0 18 15"><rect x="0.8" y="0.8" width="15.8" height="13.2" rx="2" fill="none" stroke="#e4e4e4" stroke-width="1.4"/><rect x="2.8" y="2.8" width="11.8" height="9.2" fill="#dcdcdc"/></svg>
<svg style="left:1314.2px;top:773px;" width="8.6" height="6" viewBox="0 0 8.6 6"><path d="M1 1L4.3 4.6L7.6 1" fill="none" stroke="#d8d8d8" stroke-width="1.9" stroke-linecap="round" stroke-linejoin="round"/></svg>
<svg style="left:1338.5px;top:766px;" width="24" height="19" viewBox="0 0 24 19"><path d="M2.6 15C3.4 8.6 7 3.2 14.6 2.2" fill="none" stroke="#dcdcdc" stroke-width="1.3"/><circle cx="2.6" cy="16.2" r="1.7" fill="none" stroke="#dcdcdc" stroke-width="1.1"/><circle cx="7.4" cy="5.6" r="1.5" fill="#212121" stroke="#dcdcdc" stroke-width="1.1"/><path d="M17.6 1.6C20.6 5 21.6 9.4 20.4 13H14.8C13.6 9.4 14.6 5 17.6 1.6Z" fill="#e0e0e0"/><path d="M17.6 4.4V9.6" stroke="#212121" stroke-width="1.1"/><circle cx="17.6" cy="10" r="1" fill="#212121"/><rect x="13.6" y="14.4" width="8" height="2.8" fill="#e0e0e0"/></svg>
<svg style="left:1368.2px;top:773px;" width="8.6" height="6" viewBox="0 0 8.6 6"><path d="M1 1L4.3 4.6L7.6 1" fill="none" stroke="#d8d8d8" stroke-width="1.9" stroke-linecap="round" stroke-linejoin="round"/></svg>
<svg style="left:1401px;top:766.5px;" width="19" height="19" viewBox="0 0 19 19"><path d="M17.6 0.8L8 10.4L9.8 12.2L18.4 2.2Z" fill="#e0e0e0"/><path d="M7 11.4C5 11.2 3.6 12.6 3.4 14.6C3.2 16 2.2 16.8 1 17.2C3.6 18.4 7.2 17.6 8.6 14.8C9.2 13.6 8.8 12.4 7 11.4Z" fill="#e0e0e0"/></svg>
<div class="t" style="left:1450.3px;top:762.7px;height:26px;line-height:26px;font-size:22.5px;color:#e6e6e6;font-weight:700;font-family:'Liberation Serif',serif">T</div>
<svg style="left:1475.2px;top:773px;" width="8.6" height="6" viewBox="0 0 8.6 6"><path d="M1 1L4.3 4.6L7.6 1" fill="none" stroke="#d8d8d8" stroke-width="1.9" stroke-linecap="round" stroke-linejoin="round"/></svg>
<svg style="left:1501px;top:768px;" width="20" height="15" viewBox="0 0 20 15"><rect x="0.8" y="0.8" width="18.4" height="13.4" fill="#4e4e4e" stroke="#8a8a8a" stroke-width="1.4"/><rect x="5" y="5" width="10" height="5" fill="#1a1a1a" stroke="#9a9a9a" stroke-width="1.2"/></svg>
<svg style="left:1529.2px;top:773px;" width="8.6" height="6" viewBox="0 0 8.6 6"><path d="M1 1L4.3 4.6L7.6 1" fill="none" stroke="#8a8a8a" stroke-width="1.9" stroke-linecap="round" stroke-linejoin="round"/></svg>
<svg style="left:1966.5px;top:766.5px;" width="18" height="18" viewBox="0 0 18 18"><path d="M1.2 6V1.2H6M1.6 1.6L16.4 16.4M12 16.8H16.8V12" fill="none" stroke="#e0e0e0" stroke-width="1.4" stroke-linecap="round" stroke-linejoin="round"/></svg>
<div style="left:447px;top:792.5px;width:1553px;height:34.5px;background:#383838;"></div>
<div style="left:447px;top:792px;width:1553px;height:1px;background:#121212;"></div>
<div style="left:447px;top:826.5px;width:1553px;height:1px;background:#121212;"></div>
<svg style="left:467.5px;top:801.5px;" width="23" height="19" viewBox="0 0 23 19"><path d="M2.6 6.6H5.8L10 2.8V16L5.8 12.2H2.6Z" fill="#b4b4b4"/><path d="M12.2 6.6C13.4 8.2 13.4 10.8 12.2 12.4M14.4 4.4C16.8 7 16.8 12 14.4 14.6M16.6 2.2C20.2 6 20.2 13 16.6 16.8" fill="none" stroke="#b4b4b4" stroke-width="1.4"/><path d="M0.8 1.6L21.4 16.6" stroke="#383838" stroke-width="3.8"/><path d="M0.8 1.6L21.4 16.6" stroke="#c8c8c8" stroke-width="1.5"/></svg>
<svg style="left:511.5px;top:802.2px;" width="21" height="17" viewBox="0 0 21 17"><g fill="none" stroke="#6466ea" stroke-width="1.8" stroke-linecap="round" stroke-linejoin="round"><path d="M8.6 12.8H6A4.6 4.6 0 0 1 6 3.6H13.2"/><path d="M12.4 3.6H15A4.6 4.6 0 0 1 15 12.8H7.8"/><path d="M10.8 0.9L13.6 3.6L10.8 6.3"/><path d="M10.2 10.1L7.4 12.8L10.2 15.5"/></g></svg>
<svg style="left:557.3px;top:801.7px;" width="23" height="19" viewBox="0 0 23 19"><circle cx="9" cy="9" r="7.6" fill="none" stroke="#d9523c" stroke-width="1.6"/><path d="M17.2 8.2L21.4 12.4L17.2 16.6L13 12.4Z" fill="#383838" stroke="#383838" stroke-width="4"/><path d="M17.2 8.4L21.2 12.4L17.2 16.4L13.2 12.4Z" fill="#383838" stroke="#d9523c" stroke-width="1.7"/></svg>
<svg style="left:1087px;top:804.5px;" width="11" height="12" viewBox="0 0 11 12"><path d="M1.4 0.6V11.4" stroke="#d0d0d0" stroke-width="1.6"/><path d="M10.4 0.8V11.2L3 6Z" fill="#d0d0d0"/></svg>
<svg style="left:1120.5px;top:803.5px;" width="12" height="13" viewBox="0 0 12 13"><path d="M0.6 0.6L11.4 6.5L0.6 12.4Z" fill="#d8d8d8"/></svg>
<div class="t" style="left:1167px;top:791.3px;height:32px;line-height:32px;font-size:25px;font-weight:300;white-space:nowrap;letter-spacing:0.85px;color:#6e6e6e;font-feature-settings:normal;font-family:'Noto Sans CJK JP',sans-serif">00:00:0<span style="color:#c4c4c4">2;44</span></div>
<svg style="left:1330.2px;top:807.5px;" width="8.6" height="6" viewBox="0 0 8.6 6"><path d="M1 1L4.3 4.6L7.6 1" fill="none" stroke="#d8d8d8" stroke-width="1.9" stroke-linecap="round" stroke-linejoin="round"/></svg>
<svg style="left:1366px;top:800px;" width="20" height="20" viewBox="0 0 20 20"><circle cx="10" cy="10.6" r="8.2" fill="none" stroke="#5a5a5a" stroke-width="1.4"/><path d="M10 10.6V5.6M10 10.6L13.4 7.4" stroke="#6466ea" stroke-width="1.5" stroke-linecap="round"/><circle cx="17.4" cy="2.6" r="1" fill="#6466ea"/></svg>
<svg style="left:1874.5px;top:802px;" width="18" height="17" viewBox="0 0 18 17"><rect x="0.8" y="0.8" width="16.4" height="15.4" rx="1.4" fill="none" stroke="#6466ea" stroke-width="1.5"/><path d="M4.2 1V16M13.8 1V16M4.2 8.5H13.8" stroke="#6466ea" stroke-width="1.4"/><path d="M1 4.6H4M1 8.5H4M1 12.4H4M14 4.6H17M14 8.5H17M14 12.4H17" stroke="#6466ea" stroke-width="1"/></svg>
<svg style="left:1918px;top:802px;" width="18" height="17" viewBox="0 0 18 17"><path d="M1 6H3.8L7.6 2.6V14.4L3.8 11H1Z" fill="none" stroke="#dcdcdc" stroke-width="1.3" stroke-linejoin="round"/><path d="M10 5.6C11.4 7.2 11.4 9.8 10 11.4M12.4 3.4C15 6.2 15 10.8 12.4 13.6" fill="none" stroke="#dcdcdc" stroke-width="1.3" stroke-linecap="round"/></svg>
<svg style="left:1954px;top:803px;" width="30" height="15" viewBox="0 0 30 15"><path d="M7 1L1 7.5L7 14M13 1L7 7.5L13 14" fill="none" stroke="#8a8a8a" stroke-width="1.2"/><path d="M22 1L28.6 7.5L22 14L15.4 7.5Z" fill="#383838" stroke="#e4e4e4" stroke-width="1.4"/></svg>
<div style="left:447px;top:827.5px;width:1553px;height:23.5px;background:#212121;"></div>
<div style="left:447px;top:850.8px;width:1553px;height:1.2px;background:#0e0e0e;"></div>
<div style="left:848.8px;top:827.5px;width:1.2px;height:380px;background:#0e0e0e;"></div>
<div class="t" style="top:830.0px;height:20px;line-height:20px;font-size:12.4px;color:#dcdcdc;font-weight:700;white-space:nowrap;left:455.5px;">タイムライン</div>
<div style="left:745.5999999999999px;top:832.8px;width:17.4px;height:13.4px;border-radius:2.5px;background:repeating-conic-gradient(#20203f 0 25%,#6466ea 0 50%) 0 0/6px 6px;border:1.2px solid #6466ea;"></div>
<svg style="left:782.5px;top:830.3px;" width="18" height="18" viewBox="0 0 18 18"><g transform="translate(9 9)"><circle r="5" fill="none" stroke="#6466ea" stroke-width="2.2"/><rect x="-1.0" y="-7.6" width="2.0" height="3" rx="0.8" fill="#6466ea" transform="rotate(0.0)"/><rect x="-1.0" y="-7.6" width="2.0" height="3" rx="0.8" fill="#6466ea" transform="rotate(30.0)"/><rect x="-1.0" y="-7.6" width="2.0" height="3" rx="0.8" fill="#6466ea" transform="rotate(60.0)"/><rect x="-1.0" y="-7.6" width="2.0" height="3" rx="0.8" fill="#6466ea" transform="rotate(90.0)"/><rect x="-1.0" y="-7.6" width="2.0" height="3" rx="0.8" fill="#6466ea" transform="rotate(120.0)"/><rect x="-1.0" y="-7.6" width="2.0" height="3" rx="0.8" fill="#6466ea" transform="rotate(150.0)"/><rect x="-1.0" y="-7.6" width="2.0" height="3" rx="0.8" fill="#6466ea" transform="rotate(180.0)"/><rect x="-1.0" y="-7.6" width="2.0" height="3" rx="0.8" fill="#6466ea" transform="rotate(210.0)"/><rect x="-1.0" y="-7.6" width="2.0" height="3" rx="0.8" fill="#6466ea" transform="rotate(240.0)"/><rect x="-1.0" y="-7.6" width="2.0" height="3" rx="0.8" fill="#6466ea" transform="rotate(270.0)"/><rect x="-1.0" y="-7.6" width="2.0" height="3" rx="0.8" fill="#6466ea" transform="rotate(300.0)"/><rect x="-1.0" y="-7.6" width="2.0" height="3" rx="0.8" fill="#6466ea" transform="rotate(330.0)"/></g></svg>
<svg style="left:821.5px;top:832.3px;" width="17" height="14" viewBox="0 0 17 14"><rect x="4" y="0.6" width="12.4" height="8.6" rx="1.6" fill="#6466ea"/><rect x="0.9" y="4.4" width="12.4" height="8.6" rx="1.6" fill="#212121" stroke="#6466ea" stroke-width="1.6"/></svg>
<svg style="left:1895px;top:833px;" width="26" height="13" viewBox="0 0 26 13"><path d="M5.4 1.6L10 6.5L5.4 11.4L0.8 6.5Z" fill="none" stroke="#3c3e8a" stroke-width="1.1"/><path d="M10 6.5H16" stroke="#6466ea" stroke-width="1.3"/><path d="M20 1L25.4 6.5L20 12L14.6 6.5Z" fill="#6466ea"/></svg>
<svg style="left:1935.5px;top:830px;" width="22" height="18" viewBox="0 0 22 18"><rect x="0.6" y="6" width="9.6" height="6.4" rx="1.4" fill="#e4e4e4"/><rect x="11.8" y="6" width="9.6" height="6.4" rx="1.4" fill="#e4e4e4"/><path d="M11 0.6V4M11 14.4V17.6M7.6 1.6L8.8 4M14.4 1.6L13.2 4M7.6 16.8L8.8 14.4M14.4 16.8L13.2 14.4" stroke="#e4e4e4" stroke-width="1.1"/></svg>
<svg style="left:1976.5px;top:831.5px;" width="16" height="16" viewBox="0 0 16 16"><circle cx="6.6" cy="6.6" r="5.4" fill="none" stroke="#dcdcdc" stroke-width="1.4"/><path d="M10.6 10.6L15 15" stroke="#dcdcdc" stroke-width="1.6" stroke-linecap="round"/><path d="M5 4.2L9 6.6L5 9Z" fill="#dcdcdc"/></svg>
<div style="left:447px;top:852px;width:401.8px;height:24px;background:#1e1e1e;"></div>
<div style="left:447px;top:875.6px;width:401.8px;height:1.2px;background:#0e0e0e;"></div>
<div style="left:447px;top:876.8px;width:401.8px;height:330px;background:#282828;"></div>
<div style="left:510px;top:876.8px;width:14px;height:1.6px;background:#6e6e6e;"></div>
<div style="left:716px;top:876.8px;width:16px;height:1.4px;background:#4a4a4a;"></div>
<div style="left:818px;top:876.8px;width:10px;height:1.4px;background:#6a6a6a;"></div>
<div style="left:452px;top:876.8px;width:12px;height:1px;background:#3a3a6a;"></div>
<div style="left:447px;top:891.8px;width:401.8px;height:1.3px;background:#1a1a1a;"></div>
<div style="left:452.8px;top:908.0px;width:13px;height:13px;border-radius:3.2px;background:linear-gradient(#6e70f2,#4a4cd0);box-shadow:0 0 0 0.8px #1a1a48;"></div>
<svg style="left:452.8px;top:908.0px;" width="13" height="13" viewBox="0 0 13 13"><path d="M3.2 6.8L5.6 9.6L10 3.4" fill="none" stroke="#fff" stroke-width="1.7" stroke-linecap="round" stroke-linejoin="round"/></svg>
<div style="left:523.6px;top:906.5px;width:16.6px;height:16.6px;border-radius:2.5px;background:repeating-conic-gradient(#f0f0f0 0 25%,#c0c0c0 0 50%) 0 0/4px 4px;"></div>
<div class="t" style="top:905.0px;height:20px;line-height:20px;font-size:12px;color:#e2e2e2;font-weight:500;white-space:nowrap;left:547.7px;">イメージマスク</div>
<svg style="left:814.6px;top:908.0px;" width="15" height="14" viewBox="0 0 15 14"><path d="M1.2 8V4.4a2.6 2.6 0 0 1 5.2 0V7" fill="none" stroke="#a8a8a8" stroke-width="1.7"/><rect x="5.2" y="6.6" width="9.4" height="6.6" rx="0.8" fill="#a8a8a8"/></svg>
<div style="left:447px;top:936.8px;width:401.8px;height:1.3px;background:#1a1a1a;"></div>
<div style="left:447px;top:938.1px;width:401.8px;height:43.59999999999998px;background:#262626;"></div>
<div style="left:452.8px;top:952.9499999999999px;width:13px;height:13px;border-radius:3.2px;background:linear-gradient(#4a4a4a,#646464);box-shadow:0 0 0 0.6px #1c1c1c;"></div>
<svg style="left:510.6px;top:952.9499999999999px;" width="14" height="15" viewBox="0 0 14 15"><path d="M0.6 14.4C0.6 6 5 1 13.4 0.8V14.4Z" fill="#6a6a6a"/><path d="M0.6 14.4C0.6 6 5 1 13.4 0.8" fill="none" stroke="#8a8a8a" stroke-width="1.2"/></svg>
<div class="t" style="top:949.9px;height:20px;line-height:20px;font-size:12px;color:#6c6c6c;font-weight:500;white-space:nowrap;left:533px;"><b class="l">Mask-Name</b>のコピー</div>
<svg style="left:814.6px;top:952.9499999999999px;" width="15" height="14" viewBox="0 0 15 14"><path d="M1.2 8V4.4a2.6 2.6 0 0 1 5.2 0V7" fill="none" stroke="#a8a8a8" stroke-width="1.7"/><rect x="5.2" y="6.6" width="9.4" height="6.6" rx="0.8" fill="#a8a8a8"/></svg>
<div style="left:447px;top:981.6999999999999px;width:401.8px;height:1.3px;background:#1a1a1a;"></div>
<div style="left:452.8px;top:997.8px;width:13px;height:13px;border-radius:3.2px;background:linear-gradient(#6e70f2,#4a4cd0);box-shadow:0 0 0 0.8px #1a1a48;"></div>
<svg style="left:452.8px;top:997.8px;" width="13" height="13" viewBox="0 0 13 13"><path d="M3.2 6.8L5.6 9.6L10 3.4" fill="none" stroke="#fff" stroke-width="1.7" stroke-linecap="round" stroke-linejoin="round"/></svg>
<svg style="left:496.6px;top:999.3px;" width="11" height="10" viewBox="0 0 11 10"><path d="M0 0.6H10.4L5.2 9.4Z" fill="#dcdcdc"/></svg>
<svg style="left:509.7px;top:996.8px;will-change:transform;" width="17" height="17" viewBox="0 0 17 17"><rect x="0.5" y="0.5" width="16" height="16" rx="2" fill="#555" stroke="#7a7a7a"/><text x="8.5" y="14" text-anchor="middle" font-family="Liberation Serif,serif" font-size="15" font-weight="700" fill="#e4e4e4">T</text></svg>
<div class="t" style="top:994.8px;height:20px;line-height:20px;font-size:12px;color:#e2e2e2;font-weight:500;white-space:nowrap;left:533px;">秋川ゆうのコピー</div>
<div style="left:716.5px;top:997.3px;width:15.5px;height:14.5px;border-radius:2.5px;background:repeating-conic-gradient(#747474 0 25%,#909090 0 50%) 0 0/4px 4px;"></div>
<svg style="left:814.6px;top:997.8px;" width="15" height="14" viewBox="0 0 15 14"><path d="M1.2 8V4.4a2.6 2.6 0 0 1 5.2 0V7" fill="none" stroke="#a8a8a8" stroke-width="1.7"/><rect x="5.2" y="6.6" width="9.4" height="6.6" rx="0.8" fill="#a8a8a8"/></svg>
<div style="left:447px;top:1026.5px;width:401.8px;height:1.3px;background:#1a1a1a;"></div>
<div style="left:452.8px;top:1042.5499999999997px;width:13px;height:13px;border-radius:3.2px;background:linear-gradient(#6e70f2,#4a4cd0);box-shadow:0 0 0 0.8px #1a1a48;"></div>
<svg style="left:452.8px;top:1042.5499999999997px;" width="13" height="13" viewBox="0 0 13 13"><path d="M3.2 6.8L5.6 9.6L10 3.4" fill="none" stroke="#fff" stroke-width="1.7" stroke-linecap="round" stroke-linejoin="round"/></svg>
<div style="left:523.6px;top:1041.0499999999997px;width:16.6px;height:16.6px;border-radius:2.5px;background:repeating-conic-gradient(#f0f0f0 0 25%,#c0c0c0 0 50%) 0 0/4px 4px;"></div>
<div class="t" style="top:1039.5px;height:20px;line-height:20px;font-size:12px;color:#e2e2e2;font-weight:500;white-space:nowrap;left:547.7px;">イメージマスク</div>
<svg style="left:814.6px;top:1042.5499999999997px;" width="15" height="14" viewBox="0 0 15 14"><path d="M1.2 8V4.4a2.6 2.6 0 0 1 5.2 0V7" fill="none" stroke="#a8a8a8" stroke-width="1.7"/><rect x="5.2" y="6.6" width="9.4" height="6.6" rx="0.8" fill="#a8a8a8"/></svg>
<div style="left:447px;top:1071.2px;width:401.8px;height:1.3px;background:#1a1a1a;"></div>
<div style="left:452.8px;top:1087.2999999999997px;width:13px;height:13px;border-radius:3.2px;background:linear-gradient(#6e70f2,#4a4cd0);box-shadow:0 0 0 0.8px #1a1a48;"></div>
<svg style="left:452.8px;top:1087.2999999999997px;" width="13" height="13" viewBox="0 0 13 13"><path d="M3.2 6.8L5.6 9.6L10 3.4" fill="none" stroke="#fff" stroke-width="1.7" stroke-linecap="round" stroke-linejoin="round"/></svg>
<svg style="left:510.6px;top:1087.2999999999997px;" width="14" height="15" viewBox="0 0 14 15"><path d="M0.6 14.4C0.6 6 5 1 13.4 0.8V14.4Z" fill="#a0a0a0"/><path d="M0.6 14.4C0.6 6 5 1 13.4 0.8" fill="none" stroke="#e0e0e0" stroke-width="1.2"/></svg>
<div class="t" style="top:1084.3px;height:20px;line-height:20px;font-size:12px;color:#e2e2e2;font-weight:500;white-space:nowrap;left:533px;"><b class="l">BG-White</b>のコピー</div>
<svg style="left:814.6px;top:1087.2999999999997px;" width="15" height="14" viewBox="0 0 15 14"><path d="M1.2 8V4.4a2.6 2.6 0 0 1 5.2 0V7" fill="none" stroke="#a8a8a8" stroke-width="1.7"/><rect x="5.2" y="6.6" width="9.4" height="6.6" rx="0.8" fill="#a8a8a8"/></svg>
<div style="left:447px;top:1116.0px;width:401.8px;height:1.3px;background:#1a1a1a;"></div>
<div style="left:452.8px;top:1132.0499999999997px;width:13px;height:13px;border-radius:3.2px;background:linear-gradient(#6e70f2,#4a4cd0);box-shadow:0 0 0 0.8px #1a1a48;"></div>
<svg style="left:452.8px;top:1132.0499999999997px;" width="13" height="13" viewBox="0 0 13 13"><path d="M3.2 6.8L5.6 9.6L10 3.4" fill="none" stroke="#fff" stroke-width="1.7" stroke-linecap="round" stroke-linejoin="round"/></svg>
<svg style="left:510.6px;top:1132.0499999999997px;" width="14" height="15" viewBox="0 0 14 15"><path d="M0.6 14.4C0.6 6 5 1 13.4 0.8V14.4Z" fill="#a0a0a0"/><path d="M0.6 14.4C0.6 6 5 1 13.4 0.8" fill="none" stroke="#e0e0e0" stroke-width="1.2"/></svg>
<div class="t" style="top:1129.0px;height:20px;line-height:20px;font-size:12px;color:#e2e2e2;font-weight:500;white-space:nowrap;left:533px;"><b class="l">BG-Blue</b>のコピー</div>
<svg style="left:814.6px;top:1132.0499999999997px;" width="15" height="14" viewBox="0 0 15 14"><path d="M1.2 8V4.4a2.6 2.6 0 0 1 5.2 0V7" fill="none" stroke="#a8a8a8" stroke-width="1.7"/><rect x="5.2" y="6.6" width="9.4" height="6.6" rx="0.8" fill="#a8a8a8"/></svg>
<div style="left:447px;top:1160.7px;width:401.8px;height:1.3px;background:#1a1a1a;"></div>
<div style="left:452.8px;top:1176.75px;width:13px;height:13px;border-radius:3.2px;background:linear-gradient(#6e70f2,#4a4cd0);box-shadow:0 0 0 0.8px #1a1a48;"></div>
<svg style="left:452.8px;top:1176.75px;" width="13" height="13" viewBox="0 0 13 13"><path d="M3.2 6.8L5.6 9.6L10 3.4" fill="none" stroke="#fff" stroke-width="1.7" stroke-linecap="round" stroke-linejoin="round"/></svg>
<svg style="left:495.7px;top:1175.75px;" width="17" height="16" viewBox="0 0 17 16"><rect x="3.6" y="4.2" width="12" height="10.6" rx="0.8" fill="#5a5a5a"/><rect x="0" y="0.4" width="12.2" height="10.6" rx="0.8" fill="#707070" stroke="#282828" stroke-width="0.8"/></svg>
<div class="t" style="top:1173.2px;height:20px;line-height:20px;font-size:12px;color:#6c6c6c;font-weight:500;white-space:nowrap;left:519px;">グループ</div>
<svg style="left:797px;top:1176.25px;" width="14" height="14" viewBox="0 0 14 14"><rect x="0" y="0.3" width="9.4" height="13.4" fill="#6a6a6a"/><rect x="4.2" y="3.2" width="9" height="7.2" fill="#a8a8a8"/></svg>
<svg style="left:814.6px;top:1176.75px;" width="15" height="14" viewBox="0 0 15 14"><path d="M1.2 8V4.4a2.6 2.6 0 0 1 5.2 0V7" fill="none" stroke="#a8a8a8" stroke-width="1.7"/><rect x="5.2" y="6.6" width="9.4" height="6.6" rx="0.8" fill="#a8a8a8"/></svg>
<div style="left:447px;top:1206px;width:1553px;height:1.4px;background:#0e0e0e;"></div>
<div style="left:447px;top:1207.4px;width:1553px;height:24px;background:#1e1e1e;"></div>
<div class="t" style="top:1209.0px;height:20px;line-height:20px;font-size:11px;color:#c8c8c8;font-weight:700;white-space:nowrap;left:452.5px;">小</div>
<svg style="left:525px;top:1212px;" width="8" height="14" viewBox="0 0 8 14"><path d="M1.4 5L4 2.2L6.6 5M1.4 9L4 11.8L6.6 9" fill="none" stroke="#5a5a5a" stroke-width="1.3" stroke-linecap="round" stroke-linejoin="round"/></svg>
<svg style="left:705px;top:1211.5px;" width="15" height="15" viewBox="0 0 15 15"><circle cx="6" cy="6" r="4.8" fill="#4a4a4a" stroke="#6a6a6a" stroke-width="1.2"/><path d="M3.6 6H8.4" stroke="#9a9a9a" stroke-width="1.3"/><path d="M9.6 9.6L13.6 13.6" stroke="#6a6a6a" stroke-width="1.6" stroke-linecap="round"/></svg>
<div style="left:736px;top:1218.6px;width:85px;height:1.6px;background:#141414;"></div>
<div style="left:730.3px;top:1213px;width:12px;height:12px;background:#acacac;border-radius:50%;"></div>
<svg style="left:831px;top:1211px;" width="15" height="15" viewBox="0 0 15 15"><circle cx="6" cy="6" r="4.8" fill="#4a4a4a" stroke="#6a6a6a" stroke-width="1.2"/><path d="M3.6 6H8.4M6 3.6V8.4" stroke="#9a9a9a" stroke-width="1.3"/><path d="M9.6 9.6L13.6 13.6" stroke="#6a6a6a" stroke-width="1.6" stroke-linecap="round"/></svg>
<div style="left:862px;top:1215.5px;width:1130.5px;height:7.5px;background:#3a3a3a;border-radius:4px;"></div>
<div style="left:867px;top:1217.5px;width:1px;height:3.5px;background:#5a5a5a;"></div>
<div style="left:869.5px;top:1217.5px;width:1px;height:3.5px;background:#5a5a5a;"></div>
<div style="left:1984px;top:1217.5px;width:1px;height:3.5px;background:#5a5a5a;"></div>
<div style="left:1986.5px;top:1217.5px;width:1px;height:3.5px;background:#5a5a5a;"></div>
<div style="left:850px;top:852px;width:1150px;height:24px;background:#212121;"></div>
<div style="left:850px;top:875.6px;width:1150px;height:1.2px;background:#141414;"></div>
<div style="left:850px;top:876.8px;width:47.5px;height:329.2px;background:#181818;"></div>
<div style="left:897.5px;top:876.8px;width:1040.5px;height:329.2px;background:#212121;"></div>
<div style="left:850px;top:937.6px;width:1136.5px;height:44.8px;background:rgba(0,0,0,0.22);"></div>
<div style="left:996.8670000000001px;top:857.5px;width:1px;height:12.5px;background:#303030;"></div>
<div style="left:992.534px;top:857.5px;width:1px;height:12.5px;background:#303030;"></div>
<div style="left:988.201px;top:857.5px;width:1px;height:12.5px;background:#303030;"></div>
<div style="left:983.868px;top:857.5px;width:1px;height:12.5px;background:#303030;"></div>
<div style="left:979.5350000000001px;top:857.5px;width:1px;height:12.5px;background:#303030;"></div>
<div style="left:975.202px;top:857.5px;width:1px;height:12.5px;background:#303030;"></div>
<div class="t" style="top:853.8px;height:20px;line-height:20px;font-size:12.3px;color:#8c8c8c;font-weight:400;white-space:nowrap;letter-spacing:0.22px;left:901.3000000000001px;">00:00:00;00</div>
<div style="left:1001.0px;top:857px;width:1.4px;height:14px;background:#747474;"></div>
<div style="left:1100.867px;top:857.5px;width:1px;height:12.5px;background:#303030;"></div>
<div style="left:1096.534px;top:857.5px;width:1px;height:12.5px;background:#303030;"></div>
<div style="left:1092.201px;top:857.5px;width:1px;height:12.5px;background:#303030;"></div>
<div style="left:1087.868px;top:857.5px;width:1px;height:12.5px;background:#303030;"></div>
<div style="left:1083.535px;top:857.5px;width:1px;height:12.5px;background:#303030;"></div>
<div style="left:1079.202px;top:857.5px;width:1px;height:12.5px;background:#303030;"></div>
<div class="t" style="top:853.8px;height:20px;line-height:20px;font-size:12.3px;color:#8c8c8c;font-weight:400;white-space:nowrap;letter-spacing:0.22px;left:1005.3000000000001px;">00:00:01;00</div>
<div style="left:1001.2px;top:878px;width:0px;height:328px;border-left:1px dotted #363636;"></div>
<div style="left:1105.0px;top:857px;width:1.4px;height:14px;background:#747474;"></div>
<div style="left:1204.867px;top:857.5px;width:1px;height:12.5px;background:#303030;"></div>
<div style="left:1200.534px;top:857.5px;width:1px;height:12.5px;background:#303030;"></div>
<div style="left:1196.201px;top:857.5px;width:1px;height:12.5px;background:#303030;"></div>
<div style="left:1191.868px;top:857.5px;width:1px;height:12.5px;background:#303030;"></div>
<div style="left:1187.535px;top:857.5px;width:1px;height:12.5px;background:#303030;"></div>
<div style="left:1183.202px;top:857.5px;width:1px;height:12.5px;background:#303030;"></div>
<div class="t" style="top:853.8px;height:20px;line-height:20px;font-size:12.3px;color:#8c8c8c;font-weight:400;white-space:nowrap;letter-spacing:0.22px;left:1109.3px;">00:00:02;00</div>
<div style="left:1105.2px;top:878px;width:0px;height:328px;border-left:1px dotted #363636;"></div>
<div style="left:1209.0px;top:857px;width:1.4px;height:14px;background:#747474;"></div>
<div style="left:1308.867px;top:857.5px;width:1px;height:12.5px;background:#303030;"></div>
<div style="left:1304.534px;top:857.5px;width:1px;height:12.5px;background:#303030;"></div>
<div style="left:1300.201px;top:857.5px;width:1px;height:12.5px;background:#303030;"></div>
<div style="left:1295.868px;top:857.5px;width:1px;height:12.5px;background:#303030;"></div>
<div style="left:1291.535px;top:857.5px;width:1px;height:12.5px;background:#303030;"></div>
<div style="left:1287.202px;top:857.5px;width:1px;height:12.5px;background:#303030;"></div>
<div class="t" style="top:853.8px;height:20px;line-height:20px;font-size:12.3px;color:#8c8c8c;font-weight:400;white-space:nowrap;letter-spacing:0.22px;left:1213.3px;">00:00:03;00</div>
<div style="left:1209.2px;top:878px;width:0px;height:328px;border-left:1px dotted #363636;"></div>
<div style="left:1313.0px;top:857px;width:1.4px;height:14px;background:#747474;"></div>
<div style="left:1412.867px;top:857.5px;width:1px;height:12.5px;background:#303030;"></div>
<div style="left:1408.534px;top:857.5px;width:1px;height:12.5px;background:#303030;"></div>
<div style="left:1404.201px;top:857.5px;width:1px;height:12.5px;background:#303030;"></div>
<div style="left:1399.868px;top:857.5px;width:1px;height:12.5px;background:#303030;"></div>
<div style="left:1395.535px;top:857.5px;width:1px;height:12.5px;background:#303030;"></div>
<div style="left:1391.202px;top:857.5px;width:1px;height:12.5px;background:#303030;"></div>
<div class="t" style="top:853.8px;height:20px;line-height:20px;font-size:12.3px;color:#8c8c8c;font-weight:400;white-space:nowrap;letter-spacing:0.22px;left:1317.3px;">00:00:04;00</div>
<div style="left:1313.2px;top:878px;width:0px;height:328px;border-left:1px dotted #363636;"></div>
<div style="left:1417.0px;top:857px;width:1.4px;height:14px;background:#747474;"></div>
<div style="left:1516.867px;top:857.5px;width:1px;height:12.5px;background:#303030;"></div>
<div style="left:1512.534px;top:857.5px;width:1px;height:12.5px;background:#303030;"></div>
<div style="left:1508.201px;top:857.5px;width:1px;height:12.5px;background:#303030;"></div>
<div style="left:1503.868px;top:857.5px;width:1px;height:12.5px;background:#303030;"></div>
<div style="left:1499.535px;top:857.5px;width:1px;height:12.5px;background:#303030;"></div>
<div style="left:1495.202px;top:857.5px;width:1px;height:12.5px;background:#303030;"></div>
<div class="t" style="top:853.8px;height:20px;line-height:20px;font-size:12.3px;color:#8c8c8c;font-weight:400;white-space:nowrap;letter-spacing:0.22px;left:1421.3px;">00:00:05;00</div>
<div style="left:1417.2px;top:878px;width:0px;height:328px;border-left:1px dotted #363636;"></div>
<div style="left:1521.0px;top:857px;width:1.4px;height:14px;background:#747474;"></div>
<div style="left:1620.867px;top:857.5px;width:1px;height:12.5px;background:#303030;"></div>
<div style="left:1616.534px;top:857.5px;width:1px;height:12.5px;background:#303030;"></div>
<div style="left:1612.201px;top:857.5px;width:1px;height:12.5px;background:#303030;"></div>
<div style="left:1607.868px;top:857.5px;width:1px;height:12.5px;background:#303030;"></div>
<div style="left:1603.535px;top:857.5px;width:1px;height:12.5px;background:#303030;"></div>
<div style="left:1599.202px;top:857.5px;width:1px;height:12.5px;background:#303030;"></div>
<div class="t" style="top:853.8px;height:20px;line-height:20px;font-size:12.3px;color:#8c8c8c;font-weight:400;white-space:nowrap;letter-spacing:0.22px;left:1525.3px;">00:00:06;00</div>
<div style="left:1521.2px;top:878px;width:0px;height:328px;border-left:1px dotted #363636;"></div>
<div style="left:1625.0px;top:857px;width:1.4px;height:14px;background:#747474;"></div>
<div style="left:1724.867px;top:857.5px;width:1px;height:12.5px;background:#303030;"></div>
<div style="left:1720.534px;top:857.5px;width:1px;height:12.5px;background:#303030;"></div>
<div style="left:1716.201px;top:857.5px;width:1px;height:12.5px;background:#303030;"></div>
<div style="left:1711.868px;top:857.5px;width:1px;height:12.5px;background:#303030;"></div>
<div style="left:1707.535px;top:857.5px;width:1px;height:12.5px;background:#303030;"></div>
<div style="left:1703.202px;top:857.5px;width:1px;height:12.5px;background:#303030;"></div>
<div class="t" style="top:853.8px;height:20px;line-height:20px;font-size:12.3px;color:#8c8c8c;font-weight:400;white-space:nowrap;letter-spacing:0.22px;left:1629.3px;">00:00:07;00</div>
<div style="left:1625.2px;top:878px;width:0px;height:328px;border-left:1px dotted #363636;"></div>
<div style="left:1729.0px;top:857px;width:1.4px;height:14px;background:#747474;"></div>
<div style="left:1828.867px;top:857.5px;width:1px;height:12.5px;background:#303030;"></div>
<div style="left:1824.534px;top:857.5px;width:1px;height:12.5px;background:#303030;"></div>
<div style="left:1820.201px;top:857.5px;width:1px;height:12.5px;background:#303030;"></div>
<div style="left:1815.868px;top:857.5px;width:1px;height:12.5px;background:#303030;"></div>
<div style="left:1811.535px;top:857.5px;width:1px;height:12.5px;background:#303030;"></div>
<div style="left:1807.202px;top:857.5px;width:1px;height:12.5px;background:#303030;"></div>
<div class="t" style="top:853.8px;height:20px;line-height:20px;font-size:12.3px;color:#8c8c8c;font-weight:400;white-space:nowrap;letter-spacing:0.22px;left:1733.3px;">00:00:08;00</div>
<div style="left:1729.2px;top:878px;width:0px;height:328px;border-left:1px dotted #363636;"></div>
<div style="left:1833.0px;top:857px;width:1.4px;height:14px;background:#747474;"></div>
<div style="left:1932.867px;top:857.5px;width:1px;height:12.5px;background:#303030;"></div>
<div style="left:1928.534px;top:857.5px;width:1px;height:12.5px;background:#303030;"></div>
<div style="left:1924.201px;top:857.5px;width:1px;height:12.5px;background:#303030;"></div>
<div style="left:1919.868px;top:857.5px;width:1px;height:12.5px;background:#303030;"></div>
<div style="left:1915.535px;top:857.5px;width:1px;height:12.5px;background:#303030;"></div>
<div style="left:1911.202px;top:857.5px;width:1px;height:12.5px;background:#303030;"></div>
<div class="t" style="top:853.8px;height:20px;line-height:20px;font-size:12.3px;color:#8c8c8c;font-weight:400;white-space:nowrap;letter-spacing:0.22px;left:1837.3px;">00:00:09;00</div>
<div style="left:1833.2px;top:878px;width:0px;height:328px;border-left:1px dotted #363636;"></div>
<div class="t" style="left:1940.2px;top:853.5px;width:46px;overflow:hidden;height:20px;line-height:20px;font-size:12.3px;color:#505050;white-space:nowrap;font-feature-settings:normal">00:00:10;00</div>
<div style="left:897.2px;top:878px;width:0px;height:328px;border-left:1px dotted #3a3a3a;"></div>
<div style="left:1937.5px;top:878px;width:0px;height:328px;border-left:1px dotted #3a3a3a;"></div>
<svg style="left:892px;top:857px;" width="8" height="14" viewBox="0 0 8 14"><path d="M0.4 1.4L5.6 7L0.4 12.6Z" fill="#d0d0d0"/><path d="M6.6 0V14" stroke="#e0e0e0" stroke-width="1.5"/></svg>
<svg style="left:1937px;top:857px;" width="8" height="14" viewBox="0 0 8 14"><path d="M7.6 1.4L2.4 7L7.6 12.6Z" fill="#e0e0e0"/><path d="M1.2 0V14" stroke="#f0f0f0" stroke-width="1.7"/></svg>
<div style="left:904.5px;top:876.8px;width:1033.5px;height:1.6px;background:#2a3f6e;"></div>
<div style="left:1041px;top:884.6999999999999px;width:559px;height:3.2px;background:#1a1a1a;"></div>
<div style="left:1041px;top:885.5px;width:559px;height:1.8px;background:#d0d0d0;"></div>
<svg style="left:1036px;top:881.3px;" width="10" height="10" viewBox="0 0 10 10"><path d="M5 0.9L9.1 5L5 9.1L0.9 5Z" fill="#2a1512" stroke="#e0452e" stroke-width="1.5"/></svg>
<svg style="left:1110.3px;top:881.3px;" width="10" height="10" viewBox="0 0 10 10"><path d="M5 0.9L9.1 5L5 9.1L0.9 5Z" fill="#2a1512" stroke="#e0452e" stroke-width="1.5"/></svg>
<svg style="left:1521.7px;top:881.3px;" width="10" height="10" viewBox="0 0 10 10"><path d="M5 0.9L9.1 5L5 9.1L0.9 5Z" fill="#2a1512" stroke="#e0452e" stroke-width="1.5"/></svg>
<svg style="left:1595px;top:881.3px;" width="10" height="10" viewBox="0 0 10 10"><path d="M5 0.9L9.1 5L5 9.1L0.9 5Z" fill="#2a1512" stroke="#e0452e" stroke-width="1.5"/></svg>
<div style="left:903.2px;top:893.4px;width:1038.3px;height:29.399999999999977px;background:#5a5a5a;border-radius:3.5px;box-shadow:0 1px 0 rgba(0,0,0,0.45);"></div>
<div class="t" style="top:898.8px;height:20px;line-height:20px;font-size:12px;color:#9a9a9a;font-weight:500;white-space:nowrap;left:908.5px;">イメージマスク</div>
<div style="left:898.6px;top:938.2px;width:1047.6px;height:29.0px;background:#1b2538;border-radius:3.5px;box-shadow:0 1px 0 rgba(0,0,0,0.45);"></div>
<div style="left:904px;top:952.8px;width:23.5px;height:1.8px;background:#c4c4c4;"></div>
<div class="t" style="top:943.6px;height:20px;line-height:20px;font-size:12px;color:#6076a4;font-weight:500;white-space:nowrap;left:932.6px;"><span class="l">Mask-Name</span>のコピー</div>
<div style="left:903.2px;top:982.6px;width:1038.3px;height:29.0px;background:#253557;border-radius:3.5px;box-shadow:0 1px 0 rgba(0,0,0,0.45);"></div>
<div style="left:907.8px;top:994.8px;width:24.2px;height:7.6px;background:#05080c;"></div>
<div class="t" style="left:909px;top:994.5px;width:22.5px;overflow:hidden;height:8px;line-height:8px;font-size:5.5px;color:#3fb0c8;white-space:nowrap;font-feature-settings:normal;letter-spacing:-0.4px">秋川ゆうのコ</div>
<div class="t" style="top:988.4px;height:20px;line-height:20px;font-size:12px;color:#a4b8e0;font-weight:500;white-space:nowrap;left:937.3px;">秋川ゆうのコピー</div>
<div style="left:976.6px;top:1018.6999999999999px;width:692.8000000000001px;height:3.2px;background:#1a1a1a;"></div>
<div style="left:976.6px;top:1019.5px;width:692.8000000000001px;height:1.8px;background:#d0d0d0;"></div>
<svg style="left:971.6px;top:1015.3px;" width="10" height="10" viewBox="0 0 10 10"><path d="M5 0.9L9.1 5L5 9.1L0.9 5Z" fill="#2a1512" stroke="#e0452e" stroke-width="1.5"/></svg>
<svg style="left:1075.6px;top:1015.3px;" width="10" height="10" viewBox="0 0 10 10"><path d="M5 0.9L9.1 5L5 9.1L0.9 5Z" fill="#2a1512" stroke="#e0452e" stroke-width="1.5"/></svg>
<svg style="left:1560.4px;top:1015.3px;" width="10" height="10" viewBox="0 0 10 10"><path d="M5 0.9L9.1 5L5 9.1L0.9 5Z" fill="#2a1512" stroke="#e0452e" stroke-width="1.5"/></svg>
<svg style="left:1664.4px;top:1015.3px;" width="10" height="10" viewBox="0 0 10 10"><path d="M5 0.9L9.1 5L5 9.1L0.9 5Z" fill="#2a1512" stroke="#e0452e" stroke-width="1.5"/></svg>
<div style="left:903.2px;top:1027.3px;width:1038.3px;height:29.5px;background:#5a5a5a;border-radius:3.5px;box-shadow:0 1px 0 rgba(0,0,0,0.45);"></div>
<div class="t" style="top:1032.8px;height:20px;line-height:20px;font-size:12px;color:#9a9a9a;font-weight:500;white-space:nowrap;left:908.5px;">イメージマスク</div>
<div style="left:924.3px;top:1071.8px;width:1038.9px;height:29.40000000000009px;background:#253557;border-radius:3.5px;box-shadow:0 1px 0 rgba(0,0,0,0.45);"></div>
<div style="left:929.5px;top:1086.4px;width:23.5px;height:4px;background:#ffffff;"></div>
<div class="t" style="top:1077.3px;height:20px;line-height:20px;font-size:12px;color:#a4b8e0;font-weight:500;white-space:nowrap;left:958.3px;"><span class="l">BG-White</span>のコピー</div>
<div style="left:924px;top:1108.2px;width:793.7px;height:3.2px;background:#1a1a1a;"></div>
<div style="left:924px;top:1109.0px;width:793.7px;height:1.8px;background:#d0d0d0;"></div>
<svg style="left:919px;top:1104.8px;" width="10" height="10" viewBox="0 0 10 10"><path d="M5 0.9L9.1 5L5 9.1L0.9 5Z" fill="#2a1512" stroke="#e0452e" stroke-width="1.5"/></svg>
<svg style="left:1023px;top:1104.8px;" width="10" height="10" viewBox="0 0 10 10"><path d="M5 0.9L9.1 5L5 9.1L0.9 5Z" fill="#2a1512" stroke="#e0452e" stroke-width="1.5"/></svg>
<svg style="left:1608.7px;top:1104.8px;" width="10" height="10" viewBox="0 0 10 10"><path d="M5 0.9L9.1 5L5 9.1L0.9 5Z" fill="#2a1512" stroke="#e0452e" stroke-width="1.5"/></svg>
<svg style="left:1712.7px;top:1104.8px;" width="10" height="10" viewBox="0 0 10 10"><path d="M5 0.9L9.1 5L5 9.1L0.9 5Z" fill="#2a1512" stroke="#e0452e" stroke-width="1.5"/></svg>
<div style="left:903.2px;top:1116.9px;width:1038.3px;height:29.399999999999864px;background:#253557;border-radius:3.5px;box-shadow:0 1px 0 rgba(0,0,0,0.45);"></div>
<div style="left:907.8px;top:1131px;width:24.2px;height:3.6px;background:#3fa4c4;"></div>
<div class="t" style="top:1122.3px;height:20px;line-height:20px;font-size:12px;color:#a4b8e0;font-weight:500;white-space:nowrap;left:937.3px;"><span class="l">BG-Blue</span>のコピー</div>
<div style="left:902.3px;top:1153.0px;width:837.7px;height:3.2px;background:#1a1a1a;"></div>
<div style="left:902.3px;top:1153.8px;width:837.7px;height:1.8px;background:#d0d0d0;"></div>
<svg style="left:897.3px;top:1149.6px;" width="10" height="10" viewBox="0 0 10 10"><path d="M5 0.9L9.1 5L5 9.1L0.9 5Z" fill="#2a1512" stroke="#e0452e" stroke-width="1.5"/></svg>
<svg style="left:1001.3px;top:1149.6px;" width="10" height="10" viewBox="0 0 10 10"><path d="M5 0.9L9.1 5L5 9.1L0.9 5Z" fill="#2a1512" stroke="#e0452e" stroke-width="1.5"/></svg>
<svg style="left:1629.7px;top:1149.6px;" width="10" height="10" viewBox="0 0 10 10"><path d="M5 0.9L9.1 5L5 9.1L0.9 5Z" fill="#2a1512" stroke="#e0452e" stroke-width="1.5"/></svg>
<svg style="left:1735px;top:1149.6px;" width="10" height="10" viewBox="0 0 10 10"><path d="M5 0.9L9.1 5L5 9.1L0.9 5Z" fill="#2a1512" stroke="#e0452e" stroke-width="1.5"/></svg>
<div style="left:1938px;top:876.8px;width:48.5px;height:329.2px;background:rgba(0,0,0,0.24);"></div>
<div style="left:1986.5px;top:852px;width:13.5px;height:354px;background:#1c1c1c;"></div>
<div style="left:1991px;top:961.5px;width:9px;height:241.5px;background:#393939;border-radius:4px 0 0 4px;"></div>
<div style="left:1181.1000000000001px;top:870px;width:1.7px;height:336px;background:#e8e8e8;"></div>
<svg style="left:1175.9px;top:857px;" width="12" height="15" viewBox="0 0 12 15"><path d="M2.6 1H9.4Q10.8 1 10.8 2.4V8.4L6 13.6L1.2 8.4V2.4Q1.2 1 2.6 1Z" fill="#3a3a3a" stroke="#f0f0f0" stroke-width="1.6"/></svg>
<div style="left:439px;top:157.4px;width:383px;height:372.6px;border:6px solid #e8432b;"></div>
</body></html>
